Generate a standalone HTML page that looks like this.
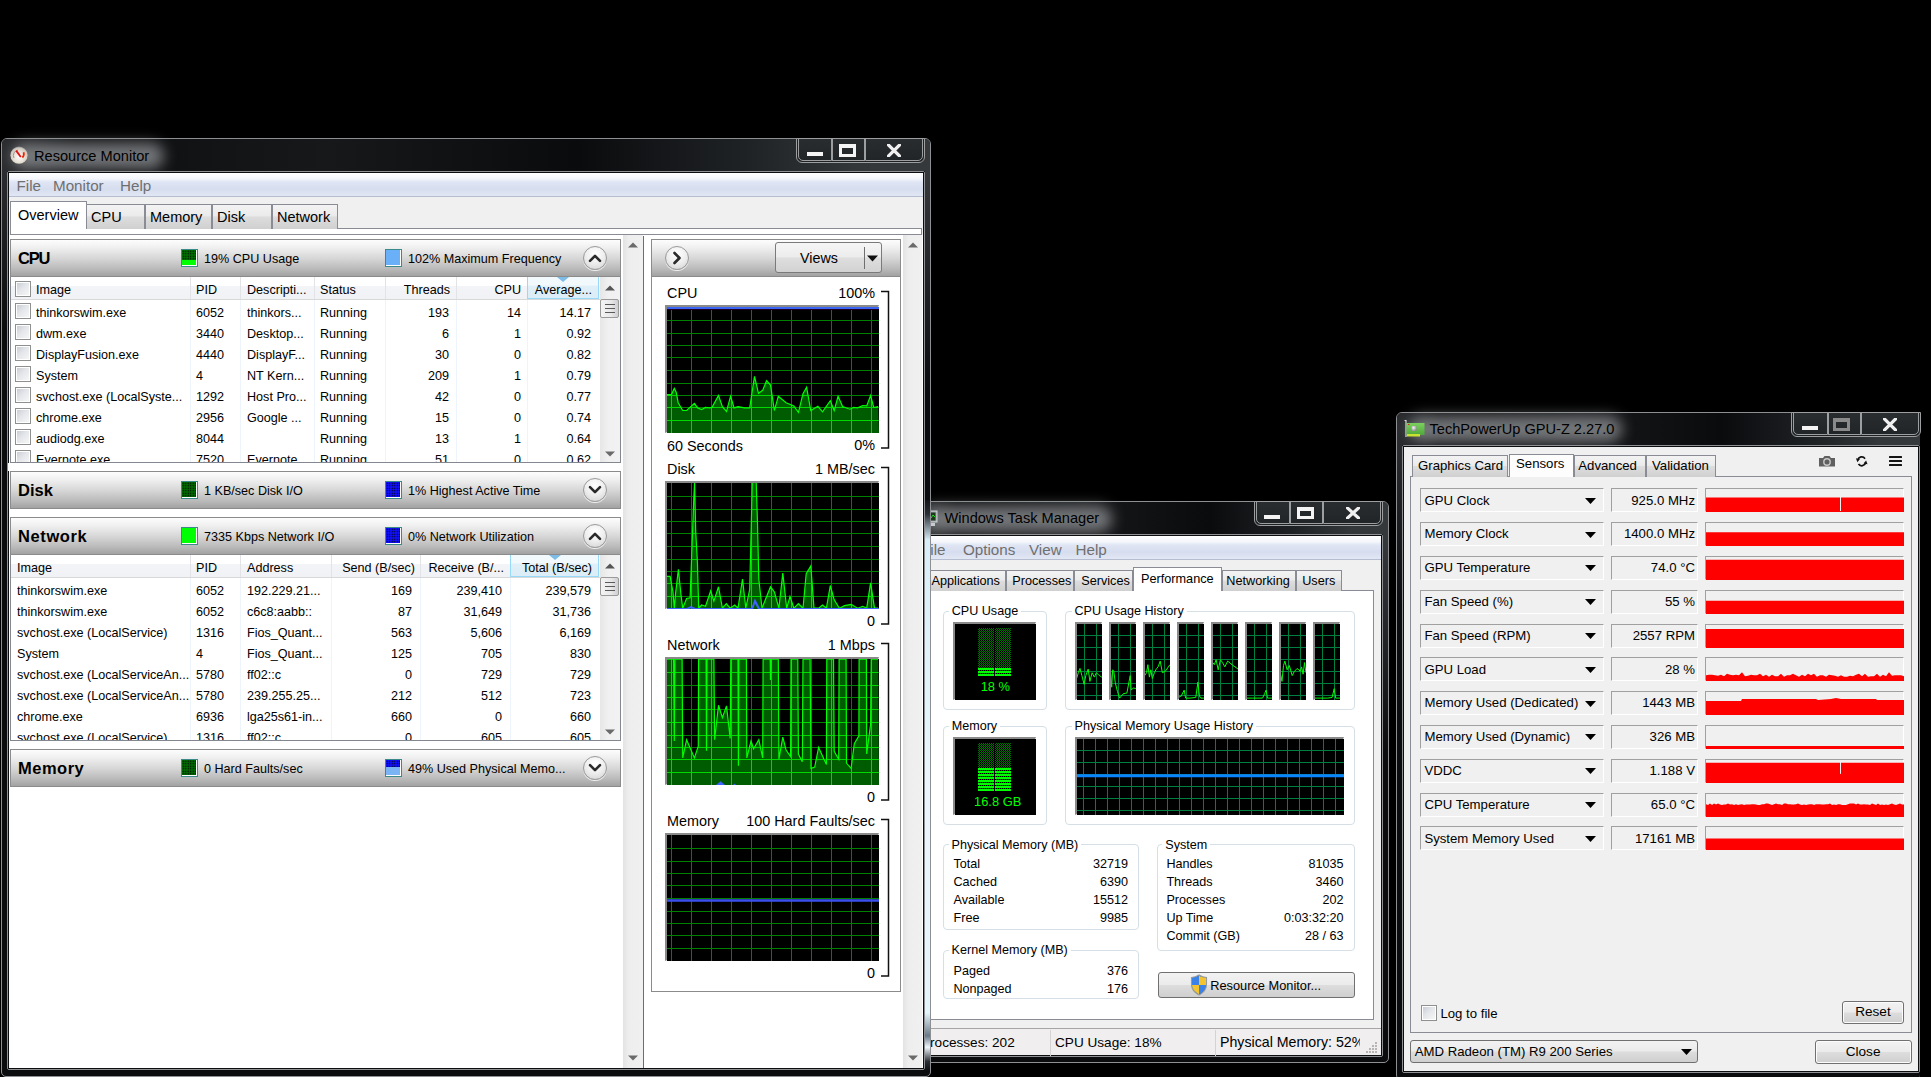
<!DOCTYPE html><html><head><meta charset="utf-8"><title>Resource Monitor</title><style>
html,body{margin:0;padding:0;background:#000;}
body{width:1931px;height:1077px;position:relative;overflow:hidden;font-family:"Liberation Sans",sans-serif;}
div,svg{position:absolute;}
.t{white-space:pre;}
</style></head><body><div style="left:918px;top:501px;width:471px;height:562px;box-sizing:border-box;border:1px solid #8d8f92;border-radius:6px 6px 5px 5px;background:#0b0c0e"></div>
<div style="left:919px;top:502px;width:469px;height:32px;border-radius:5px 5px 0 0;background:linear-gradient(90deg,#2a2c2f 0%,#0d0e10 8%,#16181a 35%,#0a0b0d 62%,#1f2225 80%,#34373a 92%,#36393c 100%)"></div>
<div style="left:919px;top:534px;width:-1px;height:160px;background:linear-gradient(#2a2c2f,#0b0c0e)"></div>
<div style="left:1383px;top:534px;width:5px;height:220px;background:linear-gradient(#36393c,#0b0c0e)"></div>
<div style="left:922.5px;top:505.5px;width:189px;height:26px;border-radius:13px;background:rgba(150,152,155,0.75);filter:blur(7px)"></div>
<div style="left:918px;top:534px;width:465px;height:523px;box-sizing:border-box;border:1px solid #8f9194;border-radius:2px;background:#000"></div>
<div style="left:919px;top:535px;width:463px;height:521px;box-sizing:border-box;border:1px solid #0c0d0e;background:#f0f0f0"></div>
<div class="t" style="top:511.14px;font-size:14.6px;line-height:14.6px;color:#000;left:944.5px;">Windows Task Manager</div>
<svg style="left:924px;top:510px" width="14" height="18" viewBox="0 0 14 18"><rect x="1" y="1" width="12" height="11" fill="#9aa0a6" stroke="#d0d4d8" stroke-width="1"/><rect x="2.5" y="2.5" width="9" height="8" fill="#1a3a1a"/><path d="M3 9 L5 4 L7 8 L9 5 L11 7" fill="none" stroke="#20e020" stroke-width="1"/><rect x="3" y="13" width="8" height="3" fill="#c8ccd0"/></svg>
<div style="left:1254px;top:501px;width:129px;height:25px;box-sizing:border-box;border:1px solid #9c9ea0;border-radius:0 0 6px 6px;background:#1e2124"></div>
<div style="left:1256px;top:501px;width:34px;height:23px;box-sizing:border-box;border:1px solid #9c9ea0;border-radius:0 0 0 5px;background:linear-gradient(#2a2d30,#222528)"></div>
<div style="left:1290px;top:501px;width:33px;height:23px;box-sizing:border-box;border:1px solid #9c9ea0;border-radius:0;background:linear-gradient(#2a2d30,#222528)"></div>
<div style="left:1323px;top:501px;width:58px;height:23px;box-sizing:border-box;border:1px solid #9c9ea0;border-radius:0 0 5px 0;background:linear-gradient(#2a2d30,#222528)"></div>
<div style="left:1264px;top:515px;width:16px;height:4px;background:#f4f4f4"></div>
<div style="left:1296.5px;top:507px;width:17px;height:12px;box-sizing:border-box;border:3px solid #f4f4f4;border-top-width:4px"></div>
<svg style="left:1346px;top:507px" width="14" height="12" viewBox="0 0 14 12"><path d="M1.5 1 L12.5 11 M12.5 1 L1.5 11" stroke="#f0f0f0" stroke-width="3.2" stroke-linecap="square"/></svg>
<div style="left:919px;top:536px;width:462px;height:24px;background:linear-gradient(#ffffff 0%,#f4f6fb 25%,#dfe5f4 40%,#d6ddee 70%,#e2e7f4 100%);border-bottom:1px solid #b7bdd0;box-sizing:border-box"></div>
<div class="t" style="top:541.63px;font-size:15.2px;line-height:15.2px;color:#6f6f6f;left:921px;">File</div>
<div class="t" style="top:541.63px;font-size:15.2px;line-height:15.2px;color:#6f6f6f;left:963px;">Options</div>
<div class="t" style="top:541.63px;font-size:15.2px;line-height:15.2px;color:#6f6f6f;left:1029px;">View</div>
<div class="t" style="top:541.63px;font-size:15.2px;line-height:15.2px;color:#6f6f6f;left:1075.5px;">Help</div>
<div style="left:919px;top:560px;width:462px;height:31px;background:#f0f0f0"></div>
<div style="left:920px;top:590px;width:454px;height:430px;background:#fff;box-sizing:border-box;border:1px solid #898c95"></div>
<div style="left:918px;top:569.5px;width:88px;height:21.5px;box-sizing:border-box;border:1px solid #898c95;border-bottom:none;background:linear-gradient(#f3f3f3 0%,#ebebeb 45%,#dddddd 50%,#d0d0d0 100%)"></div>
<div class="t" style="top:574.85px;font-size:12.7px;line-height:12.7px;color:#000;left:931.5px;">Applications</div>
<div style="left:1006px;top:569.5px;width:68px;height:21.5px;box-sizing:border-box;border:1px solid #898c95;border-bottom:none;background:linear-gradient(#f3f3f3 0%,#ebebeb 45%,#dddddd 50%,#d0d0d0 100%)"></div>
<div class="t" style="top:574.85px;font-size:12.7px;line-height:12.7px;color:#000;left:1012.2px;">Processes</div>
<div style="left:1074px;top:569.5px;width:59px;height:21.5px;box-sizing:border-box;border:1px solid #898c95;border-bottom:none;background:linear-gradient(#f3f3f3 0%,#ebebeb 45%,#dddddd 50%,#d0d0d0 100%)"></div>
<div class="t" style="top:574.85px;font-size:12.7px;line-height:12.7px;color:#000;left:1081.2px;">Services</div>
<div style="left:1222px;top:569.5px;width:74px;height:21.5px;box-sizing:border-box;border:1px solid #898c95;border-bottom:none;background:linear-gradient(#f3f3f3 0%,#ebebeb 45%,#dddddd 50%,#d0d0d0 100%)"></div>
<div class="t" style="top:574.85px;font-size:12.7px;line-height:12.7px;color:#000;left:1226.3px;">Networking</div>
<div style="left:1296px;top:569.5px;width:46px;height:21.5px;box-sizing:border-box;border:1px solid #898c95;border-bottom:none;background:linear-gradient(#f3f3f3 0%,#ebebeb 45%,#dddddd 50%,#d0d0d0 100%)"></div>
<div class="t" style="top:574.85px;font-size:12.7px;line-height:12.7px;color:#000;left:1302.2px;">Users</div>
<div style="left:1133px;top:567px;width:89px;height:24px;box-sizing:border-box;border:1px solid #898c95;border-bottom:none;background:#fff"></div>
<div class="t" style="top:572.85px;font-size:12.7px;line-height:12.7px;color:#000;left:1141px;">Performance</div>
<div style="left:942.5px;top:610.5px;width:104.0px;height:99.0px;box-sizing:border-box;border:1px solid #d5dfe5;border-radius:4px"></div>
<div class="t" style="left:948.7px;top:602.5px;height:14px;padding:0 3px;background:#fff;color:transparent;font-size:12.6px;line-height:14px">CPU Usage</div>
<div class="t" style="top:605.23px;font-size:12.6px;line-height:12.6px;color:#000;left:951.7px;">CPU Usage</div>
<div style="left:1065.3px;top:610.5px;width:290.10000000000014px;height:99.0px;box-sizing:border-box;border:1px solid #d5dfe5;border-radius:4px"></div>
<div class="t" style="left:1071.5px;top:602.5px;height:14px;padding:0 3px;background:#fff;color:transparent;font-size:12.6px;line-height:14px">CPU Usage History</div>
<div class="t" style="top:605.23px;font-size:12.6px;line-height:12.6px;color:#000;left:1074.5px;">CPU Usage History</div>
<div style="left:942.5px;top:725.5px;width:104.0px;height:99.0px;box-sizing:border-box;border:1px solid #d5dfe5;border-radius:4px"></div>
<div class="t" style="left:948.7px;top:717.5px;height:14px;padding:0 3px;background:#fff;color:transparent;font-size:12.6px;line-height:14px">Memory</div>
<div class="t" style="top:720.23px;font-size:12.6px;line-height:12.6px;color:#000;left:951.7px;">Memory</div>
<div style="left:1065.3px;top:725.5px;width:290.10000000000014px;height:99.0px;box-sizing:border-box;border:1px solid #d5dfe5;border-radius:4px"></div>
<div class="t" style="left:1071.5px;top:717.5px;height:14px;padding:0 3px;background:#fff;color:transparent;font-size:12.6px;line-height:14px">Physical Memory Usage History</div>
<div class="t" style="top:720.23px;font-size:12.6px;line-height:12.6px;color:#000;left:1074.5px;">Physical Memory Usage History</div>
<div style="left:942.6px;top:844px;width:196.89999999999998px;height:85.5px;box-sizing:border-box;border:1px solid #d5dfe5;border-radius:4px"></div>
<div class="t" style="left:948.6px;top:836px;height:14px;padding:0 3px;background:#fff;color:transparent;font-size:12.6px;line-height:14px">Physical Memory (MB)</div>
<div class="t" style="top:838.73px;font-size:12.6px;line-height:12.6px;color:#000;left:951.6px;">Physical Memory (MB)</div>
<div style="left:942.6px;top:949.7px;width:196.89999999999998px;height:49.39999999999998px;box-sizing:border-box;border:1px solid #d5dfe5;border-radius:4px"></div>
<div class="t" style="left:948.6px;top:941.7px;height:14px;padding:0 3px;background:#fff;color:transparent;font-size:12.6px;line-height:14px">Kernel Memory (MB)</div>
<div class="t" style="top:944.43px;font-size:12.6px;line-height:12.6px;color:#000;left:951.6px;">Kernel Memory (MB)</div>
<div style="left:1156.7px;top:844px;width:198.70000000000005px;height:107.29999999999995px;box-sizing:border-box;border:1px solid #d5dfe5;border-radius:4px"></div>
<div class="t" style="left:1162.3px;top:836px;height:14px;padding:0 3px;background:#fff;color:transparent;font-size:12.6px;line-height:14px">System</div>
<div class="t" style="top:838.73px;font-size:12.6px;line-height:12.6px;color:#000;left:1165.3px;">System</div>
<div style="left:953px;top:622px;width:83px;height:78px;box-sizing:border-box;border-top:2px solid #8a8a8a;border-left:2px solid #8a8a8a;border-right:1px solid #f4f4f4;border-bottom:1px solid #f4f4f4"></div>
<div style="left:955px;top:624px;width:81px;height:76px;background:#000"></div>
<div style="left:978px;top:628px;width:16px;height:48px;background:repeating-conic-gradient(#007000 0 25%,#000 0 50%) 0 0/2px 2px"></div>
<div style="left:978px;top:674px;width:16px;height:2px;background:#00ff00"></div>
<div style="left:978px;top:671px;width:16px;height:2px;background:#00ff00"></div>
<div style="left:978px;top:668px;width:16px;height:2px;background:#00ff00"></div>
<div style="left:995px;top:628px;width:16px;height:48px;background:repeating-conic-gradient(#007000 0 25%,#000 0 50%) 0 0/2px 2px"></div>
<div style="left:995px;top:674px;width:16px;height:2px;background:#00ff00"></div>
<div style="left:995px;top:671px;width:16px;height:2px;background:#00ff00"></div>
<div style="left:995px;top:668px;width:16px;height:2px;background:#00ff00"></div>
<div class="t" style="top:681.08px;font-size:12.9px;line-height:12.9px;color:#00ff00;left:980.7px;">18 %</div>
<div style="left:953px;top:737px;width:83px;height:78px;box-sizing:border-box;border-top:2px solid #8a8a8a;border-left:2px solid #8a8a8a;border-right:1px solid #f4f4f4;border-bottom:1px solid #f4f4f4"></div>
<div style="left:955px;top:739px;width:81px;height:76px;background:#000"></div>
<div style="left:978px;top:743px;width:16px;height:48px;background:repeating-conic-gradient(#007000 0 25%,#000 0 50%) 0 0/2px 2px"></div>
<div style="left:978px;top:789px;width:16px;height:2px;background:#00ff00"></div>
<div style="left:978px;top:786px;width:16px;height:2px;background:#00ff00"></div>
<div style="left:978px;top:783px;width:16px;height:2px;background:#00ff00"></div>
<div style="left:978px;top:780px;width:16px;height:2px;background:#00ff00"></div>
<div style="left:978px;top:777px;width:16px;height:2px;background:#00ff00"></div>
<div style="left:978px;top:774px;width:16px;height:2px;background:#00ff00"></div>
<div style="left:978px;top:771px;width:16px;height:2px;background:#00ff00"></div>
<div style="left:978px;top:768px;width:16px;height:2px;background:#00ff00"></div>
<div style="left:995px;top:743px;width:16px;height:48px;background:repeating-conic-gradient(#007000 0 25%,#000 0 50%) 0 0/2px 2px"></div>
<div style="left:995px;top:789px;width:16px;height:2px;background:#00ff00"></div>
<div style="left:995px;top:786px;width:16px;height:2px;background:#00ff00"></div>
<div style="left:995px;top:783px;width:16px;height:2px;background:#00ff00"></div>
<div style="left:995px;top:780px;width:16px;height:2px;background:#00ff00"></div>
<div style="left:995px;top:777px;width:16px;height:2px;background:#00ff00"></div>
<div style="left:995px;top:774px;width:16px;height:2px;background:#00ff00"></div>
<div style="left:995px;top:771px;width:16px;height:2px;background:#00ff00"></div>
<div style="left:995px;top:768px;width:16px;height:2px;background:#00ff00"></div>
<div class="t" style="top:796.08px;font-size:12.9px;line-height:12.9px;color:#00ff00;left:974px;">16.8 GB</div>
<div style="left:1075.4px;top:622.3px;width:27px;height:78px;box-sizing:border-box;border-top:2px solid #8a8a8a;border-left:2px solid #8a8a8a;border-right:1px solid #f4f4f4;border-bottom:1px solid #f4f4f4"></div>
<svg style="left:1077.4px;top:624.3px" width="25" height="76" viewBox="0 0 25 76"><rect width="25" height="76" fill="#000"/><path d="M7.5 0V76M19.5 0V76M0 11.5H25M0 23.5H25M0 35.5H25M0 47.5H25M0 59.5H25M0 71.5H25" stroke="#008040" stroke-width="1"/><path d="M-0.4 54.5 L1.3 48.7 L3.0 44.4 L4.9 51.6 L7.1 60.3 L8.8 51.6 L11.2 45.1 L12.9 57.4 L15.1 48.7 L17.3 53.1 L19.4 48.7 L22.3 51.6 L24.8 53.1" fill="none" stroke="#00ff00" stroke-width="1.0" stroke-linejoin="miter"/></svg>
<div style="left:1109.4px;top:622.3px;width:27px;height:78px;box-sizing:border-box;border-top:2px solid #8a8a8a;border-left:2px solid #8a8a8a;border-right:1px solid #f4f4f4;border-bottom:1px solid #f4f4f4"></div>
<svg style="left:1111.4px;top:624.3px" width="25" height="76" viewBox="0 0 25 76"><rect width="25" height="76" fill="#000"/><path d="M7.5 0V76M19.5 0V76M0 11.5H25M0 23.5H25M0 35.5H25M0 47.5H25M0 59.5H25M0 71.5H25" stroke="#008040" stroke-width="1"/><path d="M-0.4 47.3 L0.7 63.2 L1.7 45.8 L2.8 47.3 L4.3 58.9 L6.5 67.6 L8.6 74.1 L12.3 69.7 L15.9 69.0 L18.1 57.4 L19.2 51.6 L20.2 66.1 L22.4 63.9 L24.9 64.7" fill="none" stroke="#00ff00" stroke-width="1.0" stroke-linejoin="miter"/></svg>
<div style="left:1143.4px;top:622.3px;width:27px;height:78px;box-sizing:border-box;border-top:2px solid #8a8a8a;border-left:2px solid #8a8a8a;border-right:1px solid #f4f4f4;border-bottom:1px solid #f4f4f4"></div>
<svg style="left:1145.4px;top:624.3px" width="25" height="76" viewBox="0 0 25 76"><rect width="25" height="76" fill="#000"/><path d="M7.5 0V76M19.5 0V76M0 11.5H25M0 23.5H25M0 35.5H25M0 47.5H25M0 59.5H25M0 71.5H25" stroke="#008040" stroke-width="1"/><path d="M-0.3 51.6 L1.5 48.7 L2.9 40.7 L4.4 53.1 L5.8 45.8 L7.3 54.5 L9.4 48.7 L11.6 44.4 L13.1 42.9 L15.2 37.1 L17.4 48.7 L20.3 47.3 L24.9 40.7" fill="none" stroke="#00ff00" stroke-width="1.0" stroke-linejoin="miter"/></svg>
<div style="left:1177.4px;top:622.3px;width:27px;height:78px;box-sizing:border-box;border-top:2px solid #8a8a8a;border-left:2px solid #8a8a8a;border-right:1px solid #f4f4f4;border-bottom:1px solid #f4f4f4"></div>
<svg style="left:1179.4px;top:624.3px" width="25" height="76" viewBox="0 0 25 76"><rect width="25" height="76" fill="#000"/><path d="M7.5 0V76M19.5 0V76M0 11.5H25M0 23.5H25M0 35.5H25M0 47.5H25M0 59.5H25M0 71.5H25" stroke="#008040" stroke-width="1"/><path d="M-0.4 73.4 L2.3 71.9 L5.2 66.1 L6.6 74.1 L11.0 74.1 L16.8 73.4 L18.9 58.1 L20.4 71.9 L21.8 74.1 L25.0 74.1" fill="none" stroke="#00ff00" stroke-width="1.0" stroke-linejoin="miter"/></svg>
<div style="left:1211.4px;top:622.3px;width:27px;height:78px;box-sizing:border-box;border-top:2px solid #8a8a8a;border-left:2px solid #8a8a8a;border-right:1px solid #f4f4f4;border-bottom:1px solid #f4f4f4"></div>
<svg style="left:1213.4px;top:624.3px" width="25" height="76" viewBox="0 0 25 76"><rect width="25" height="76" fill="#000"/><path d="M7.5 0V76M19.5 0V76M0 11.5H25M0 23.5H25M0 35.5H25M0 47.5H25M0 59.5H25M0 71.5H25" stroke="#008040" stroke-width="1"/><path d="M-0.1 38.6 L1.3 40.7 L3.1 35.7 L5.2 45.8 L7.4 35.7 L9.6 38.6 L11.8 42.9 L14.7 37.1 L19.0 40.7 L25.1 45.1" fill="none" stroke="#00ff00" stroke-width="1.0" stroke-linejoin="miter"/></svg>
<div style="left:1245.4px;top:622.3px;width:27px;height:78px;box-sizing:border-box;border-top:2px solid #8a8a8a;border-left:2px solid #8a8a8a;border-right:1px solid #f4f4f4;border-bottom:1px solid #f4f4f4"></div>
<svg style="left:1247.4px;top:624.3px" width="25" height="76" viewBox="0 0 25 76"><rect width="25" height="76" fill="#000"/><path d="M7.5 0V76M19.5 0V76M0 11.5H25M0 23.5H25M0 35.5H25M0 47.5H25M0 59.5H25M0 71.5H25" stroke="#008040" stroke-width="1"/><path d="M-0.5 74.1 L5.3 74.1 L15.5 74.1 L17.6 69.7 L19.1 66.1 L20.5 74.1 L25.2 74.1" fill="none" stroke="#00ff00" stroke-width="1.0" stroke-linejoin="miter"/></svg>
<div style="left:1279.4px;top:622.3px;width:27px;height:78px;box-sizing:border-box;border-top:2px solid #8a8a8a;border-left:2px solid #8a8a8a;border-right:1px solid #f4f4f4;border-bottom:1px solid #f4f4f4"></div>
<svg style="left:1281.4px;top:624.3px" width="25" height="76" viewBox="0 0 25 76"><rect width="25" height="76" fill="#000"/><path d="M7.5 0V76M19.5 0V76M0 11.5H25M0 23.5H25M0 35.5H25M0 47.5H25M0 59.5H25M0 71.5H25" stroke="#008040" stroke-width="1"/><path d="M-0.4 50.2 L1.0 57.4 L2.5 41.5 L3.9 37.1 L6.1 45.8 L8.3 41.5 L11.2 51.6 L13.4 47.3 L16.3 44.4 L19.2 47.3 L20.6 42.9 L22.1 50.2 L23.5 38.6 L25.0 48.7" fill="none" stroke="#00ff00" stroke-width="1.0" stroke-linejoin="miter"/></svg>
<div style="left:1313.4px;top:622.3px;width:27px;height:78px;box-sizing:border-box;border-top:2px solid #8a8a8a;border-left:2px solid #8a8a8a;border-right:1px solid #f4f4f4;border-bottom:1px solid #f4f4f4"></div>
<svg style="left:1315.4px;top:624.3px" width="25" height="76" viewBox="0 0 25 76"><rect width="25" height="76" fill="#000"/><path d="M7.5 0V76M19.5 0V76M0 11.5H25M0 23.5H25M0 35.5H25M0 47.5H25M0 59.5H25M0 71.5H25" stroke="#008040" stroke-width="1"/><path d="M-0.3 74.1 L12.7 74.1 L17.1 73.4 L19.2 64.7 L20.7 74.1 L25.3 74.1" fill="none" stroke="#00ff00" stroke-width="1.0" stroke-linejoin="miter"/></svg>
<div style="left:1075.4px;top:737.3px;width:269px;height:78px;box-sizing:border-box;border-top:2px solid #8a8a8a;border-left:2px solid #8a8a8a;border-right:1px solid #f4f4f4;border-bottom:1px solid #f4f4f4"></div>
<svg style="left:1077.4px;top:739.3px" width="267" height="76" viewBox="0 0 267 76"><rect width="267" height="76" fill="#000"/><path d="M6.5 0V76M18.5 0V76M30.5 0V76M42.5 0V76M54.5 0V76M66.5 0V76M78.5 0V76M90.5 0V76M102.5 0V76M114.5 0V76M126.5 0V76M138.5 0V76M150.5 0V76M162.5 0V76M174.5 0V76M186.5 0V76M198.5 0V76M210.5 0V76M222.5 0V76M234.5 0V76M246.5 0V76M258.5 0V76M0 11.5H267M0 23.5H267M0 35.5H267M0 47.5H267M0 59.5H267M0 71.5H267" stroke="#008040" stroke-width="1"/><path d="M0.0 36.8 L267.0 36.8" fill="none" stroke="#0a84ff" stroke-width="3" stroke-linejoin="miter"/></svg>
<div class="t" style="top:858.43px;font-size:12.6px;line-height:12.6px;color:#000;left:953.5px;">Total</div>
<div class="t" style="top:858.43px;font-size:12.6px;line-height:12.6px;color:#000;right:803px;text-align:right;">32719</div>
<div class="t" style="top:876.43px;font-size:12.6px;line-height:12.6px;color:#000;left:953.5px;">Cached</div>
<div class="t" style="top:876.43px;font-size:12.6px;line-height:12.6px;color:#000;right:803px;text-align:right;">6390</div>
<div class="t" style="top:894.43px;font-size:12.6px;line-height:12.6px;color:#000;left:953.5px;">Available</div>
<div class="t" style="top:894.43px;font-size:12.6px;line-height:12.6px;color:#000;right:803px;text-align:right;">15512</div>
<div class="t" style="top:912.43px;font-size:12.6px;line-height:12.6px;color:#000;left:953.5px;">Free</div>
<div class="t" style="top:912.43px;font-size:12.6px;line-height:12.6px;color:#000;right:803px;text-align:right;">9985</div>
<div class="t" style="top:964.53px;font-size:12.6px;line-height:12.6px;color:#000;left:953.5px;">Paged</div>
<div class="t" style="top:964.53px;font-size:12.6px;line-height:12.6px;color:#000;right:803px;text-align:right;">376</div>
<div class="t" style="top:982.53px;font-size:12.6px;line-height:12.6px;color:#000;left:953.5px;">Nonpaged</div>
<div class="t" style="top:982.53px;font-size:12.6px;line-height:12.6px;color:#000;right:803px;text-align:right;">176</div>
<div class="t" style="top:858.43px;font-size:12.6px;line-height:12.6px;color:#000;left:1166.4px;">Handles</div>
<div class="t" style="top:858.43px;font-size:12.6px;line-height:12.6px;color:#000;right:587.5px;text-align:right;">81035</div>
<div class="t" style="top:876.43px;font-size:12.6px;line-height:12.6px;color:#000;left:1166.4px;">Threads</div>
<div class="t" style="top:876.43px;font-size:12.6px;line-height:12.6px;color:#000;right:587.5px;text-align:right;">3460</div>
<div class="t" style="top:894.43px;font-size:12.6px;line-height:12.6px;color:#000;left:1166.4px;">Processes</div>
<div class="t" style="top:894.43px;font-size:12.6px;line-height:12.6px;color:#000;right:587.5px;text-align:right;">202</div>
<div class="t" style="top:912.43px;font-size:12.6px;line-height:12.6px;color:#000;left:1166.4px;">Up Time</div>
<div class="t" style="top:912.43px;font-size:12.6px;line-height:12.6px;color:#000;right:587.5px;text-align:right;">0:03:32:20</div>
<div class="t" style="top:930.43px;font-size:12.6px;line-height:12.6px;color:#000;left:1166.4px;">Commit (GB)</div>
<div class="t" style="top:930.43px;font-size:12.6px;line-height:12.6px;color:#000;right:587.5px;text-align:right;">28 / 63</div>
<div style="left:1157.5px;top:972px;width:197px;height:25.5px;box-sizing:border-box;border:1px solid #707070;border-radius:3px;background:linear-gradient(#f2f2f2 0%,#ebebeb 48%,#dddddd 52%,#cfcfcf 100%)"></div>
<svg style="left:1190px;top:974px" width="18" height="22" viewBox="0 0 18 22"><path d="M9 1 C6 3 3.5 3.5 1.5 3.5 V10 C1.5 15 5 19 9 21 C13 19 16.5 15 16.5 10 V3.5 C14.5 3.5 12 3 9 1Z" fill="#2a6fd6" stroke="#9a9a9a" stroke-width="1.1"/><path d="M9 1.8 V11 H2 V3.9 C4 3.8 6.5 3.3 9 1.8Z" fill="#3b82e8"/><path d="M9 11 H16 C15.6 15 12.8 18.3 9 20.2Z" fill="#3b82e8"/><path d="M9 1.8 C11.5 3.3 14 3.8 16 3.9 V11 H9Z" fill="#f4c430"/><path d="M9 11 V20.2 C5.2 18.3 2.4 15 2 11Z" fill="#f4c430"/></svg>
<div class="t" style="top:979.76px;font-size:12.8px;line-height:12.8px;color:#000;left:1210.2px;">Resource Monitor...</div>
<div style="left:919px;top:1028px;width:462px;height:27px;background:#f0eeee;border-top:1px solid #a5a5a5;box-sizing:border-box"></div>
<div style="left:1050px;top:1030px;width:1px;height:26px;background:#d7d2d2"></div>
<div style="left:1215px;top:1030px;width:1px;height:26px;background:#d7d2d2"></div>
<div class="t" style="top:1036.19px;font-size:13.6px;line-height:13.6px;color:#000;left:921px;">Processes: 202</div>
<div class="t" style="top:1036.19px;font-size:13.6px;line-height:13.6px;color:#000;left:1055px;">CPU Usage: 18%</div>
<div style="left:1215px;top:1030px;width:145px;height:26px;overflow:hidden"><div class="t" style="left:5px;top:5.4px;font-size:14.2px;line-height:14.2px;color:#000">Physical Memory: 52%</div></div>
<svg style="left:1364px;top:1040px" width="14" height="14"><rect x="11" y="11" width="2" height="2" fill="#b8b4b4"/><rect x="11" y="8" width="2" height="2" fill="#b8b4b4"/><rect x="11" y="5" width="2" height="2" fill="#b8b4b4"/><rect x="11" y="2" width="2" height="2" fill="#b8b4b4"/><rect x="8" y="11" width="2" height="2" fill="#b8b4b4"/><rect x="8" y="8" width="2" height="2" fill="#b8b4b4"/><rect x="8" y="5" width="2" height="2" fill="#b8b4b4"/><rect x="5" y="11" width="2" height="2" fill="#b8b4b4"/><rect x="5" y="8" width="2" height="2" fill="#b8b4b4"/><rect x="2" y="11" width="2" height="2" fill="#b8b4b4"/></svg>
<div style="left:1px;top:138px;width:930px;height:939px;box-sizing:border-box;border:1px solid #8d8f92;border-radius:6px 6px 5px 5px;background:#0b0c0e"></div>
<div style="left:2px;top:139px;width:928px;height:32px;border-radius:5px 5px 0 0;background:linear-gradient(90deg,#2a2c2f 0%,#0d0e10 8%,#16181a 35%,#0a0b0d 62%,#1f2225 80%,#34373a 92%,#36393c 100%)"></div>
<div style="left:2px;top:171px;width:5px;height:160px;background:linear-gradient(#2a2c2f,#0b0c0e)"></div>
<div style="left:925px;top:171px;width:5px;height:220px;background:linear-gradient(#36393c,#0b0c0e)"></div>
<div style="left:12px;top:143px;width:152px;height:26px;border-radius:13px;background:rgba(150,152,155,0.75);filter:blur(7px)"></div>
<div style="left:7px;top:171px;width:918px;height:899px;box-sizing:border-box;border:1px solid #8f9194;border-radius:2px;background:#000"></div>
<div style="left:8px;top:172px;width:916px;height:897px;box-sizing:border-box;border:1px solid #0c0d0e;background:#f0f0f0"></div>
<div class="t" style="top:148.64px;font-size:14.6px;line-height:14.6px;color:#000;left:34px;">Resource Monitor</div>
<svg style="left:9px;top:146px" width="20" height="19" viewBox="0 0 20 19"><defs><radialGradient id="rmic" cx="50%" cy="60%" r="60%"><stop offset="0" stop-color="#ffffff"/><stop offset="0.55" stop-color="#e6dfd4"/><stop offset="0.85" stop-color="#cfc8be"/><stop offset="1" stop-color="#8a8d92"/></radialGradient></defs><circle cx="10" cy="9.2" r="8.6" fill="url(#rmic)"/><path d="M5 12 A5.5 5.5 0 0 1 9 4" fill="none" stroke="#9a9690" stroke-width="1"/><path d="M7.2 4.6 L11.8 11" stroke="#e41010" stroke-width="1.8"/><path d="M14.6 6.2 C15.2 8 14.8 10 13.4 11.6" fill="none" stroke="#f02000" stroke-width="1.7"/></svg>
<div style="left:796px;top:138px;width:129px;height:25px;box-sizing:border-box;border:1px solid #9c9ea0;border-radius:0 0 6px 6px;background:#1e2124"></div>
<div style="left:798px;top:138px;width:34px;height:23px;box-sizing:border-box;border:1px solid #9c9ea0;border-radius:0 0 0 5px;background:linear-gradient(#2a2d30,#222528)"></div>
<div style="left:832px;top:138px;width:33px;height:23px;box-sizing:border-box;border:1px solid #9c9ea0;border-radius:0;background:linear-gradient(#2a2d30,#222528)"></div>
<div style="left:865px;top:138px;width:58px;height:23px;box-sizing:border-box;border:1px solid #9c9ea0;border-radius:0 0 5px 0;background:linear-gradient(#2a2d30,#222528)"></div>
<div style="left:807px;top:152px;width:16px;height:4px;background:#f4f4f4"></div>
<div style="left:839px;top:144px;width:17px;height:13px;box-sizing:border-box;border:3px solid #f4f4f4;border-top-width:4px"></div>
<svg style="left:887px;top:144px" width="14" height="13" viewBox="0 0 14 13"><path d="M1.5 1 L12.5 12 M12.5 1 L1.5 12" stroke="#f0f0f0" stroke-width="3.2" stroke-linecap="square"/></svg>
<div style="left:925px;top:500px;width:5px;height:570px;background:linear-gradient(#121416 0%,#2a2f34 2.5%,#8a9aa6 5%,#d8eef8 7%,#eaf6fc 50%,#e6f4fb 90%,#6a7a88 94%,#f0f8ff 96%,#2a2f34 98.5%,#101214 100%)"></div>
<div style="left:9px;top:173px;width:914px;height:24px;background:linear-gradient(#ffffff 0%,#f4f6fb 25%,#dfe5f4 40%,#d6ddee 70%,#e2e7f4 100%);border-bottom:1px solid #b7bdd0;box-sizing:border-box"></div>
<div class="t" style="top:178.13px;font-size:15.2px;line-height:15.2px;color:#6f6f6f;left:16.5px;">File</div>
<div class="t" style="top:178.13px;font-size:15.2px;line-height:15.2px;color:#6f6f6f;left:53px;">Monitor</div>
<div class="t" style="top:178.13px;font-size:15.2px;line-height:15.2px;color:#6f6f6f;left:120px;">Help</div>
<div style="left:9px;top:197px;width:914px;height:38px;background:#f0f0f0"></div>
<div style="left:10px;top:228px;width:912px;height:7px;background:#fff;box-sizing:border-box;border:1px solid #898c95;border-top:none"></div>
<div style="left:10px;top:228px;width:912px;height:1px;background:#898c95"></div>
<div style="left:86px;top:204px;width:59px;height:25px;box-sizing:border-box;border:1px solid #898c95;border-bottom:none;background:linear-gradient(#f3f3f3 0%,#ebebeb 45%,#dddddd 50%,#d0d0d0 100%)"></div>
<div class="t" style="top:210.13px;font-size:14.5px;line-height:14.5px;color:#000;left:91px;">CPU</div>
<div style="left:145px;top:204px;width:67px;height:25px;box-sizing:border-box;border:1px solid #898c95;border-bottom:none;background:linear-gradient(#f3f3f3 0%,#ebebeb 45%,#dddddd 50%,#d0d0d0 100%)"></div>
<div class="t" style="top:210.13px;font-size:14.5px;line-height:14.5px;color:#000;left:150px;">Memory</div>
<div style="left:212px;top:204px;width:60px;height:25px;box-sizing:border-box;border:1px solid #898c95;border-bottom:none;background:linear-gradient(#f3f3f3 0%,#ebebeb 45%,#dddddd 50%,#d0d0d0 100%)"></div>
<div class="t" style="top:210.13px;font-size:14.5px;line-height:14.5px;color:#000;left:217px;">Disk</div>
<div style="left:272px;top:204px;width:66px;height:25px;box-sizing:border-box;border:1px solid #898c95;border-bottom:none;background:linear-gradient(#f3f3f3 0%,#ebebeb 45%,#dddddd 50%,#d0d0d0 100%)"></div>
<div class="t" style="top:210.13px;font-size:14.5px;line-height:14.5px;color:#000;left:277px;">Network</div>
<div style="left:10px;top:201px;width:77px;height:28px;box-sizing:border-box;border:1px solid #898c95;border-bottom:none;background:#fff"></div>
<div class="t" style="top:208.13px;font-size:14.5px;line-height:14.5px;color:#000;left:18px;">Overview</div>
<div style="left:9px;top:235px;width:914px;height:833px;background:#fff"></div>
<div style="left:623px;top:235px;width:20px;height:833px;background:linear-gradient(90deg,#e3e3e3 0%,#eeeeee 30%,#f0f0f0 100%)"></div>
<svg style="left:628.0px;top:242px" width="10" height="6"><path d="M0 5.5 L5 0.5 L10 5.5Z" fill="#6a6a6a"/></svg>
<svg style="left:628.0px;top:1055px" width="10" height="6"><path d="M0 0.5 L5 5.5 L10 0.5Z" fill="#6a6a6a"/></svg>
<div style="left:643px;top:236px;width:1px;height:832px;background:#6d6d6d"></div>
<div style="left:903px;top:235px;width:19px;height:833px;background:linear-gradient(90deg,#e3e3e3 0%,#eeeeee 30%,#f0f0f0 100%)"></div>
<svg style="left:907.5px;top:242px" width="10" height="6"><path d="M0 5.5 L5 0.5 L10 5.5Z" fill="#6a6a6a"/></svg>
<svg style="left:907.5px;top:1055px" width="10" height="6"><path d="M0 0.5 L5 5.5 L10 0.5Z" fill="#6a6a6a"/></svg>
<div style="left:10px;top:239px;width:611px;height:38px;box-sizing:border-box;border:1px solid #8b8b8b;background:linear-gradient(#fdfdfd 0%,#efefef 22%,#d6d6d6 52%,#bababa 80%,#a2a2a2 100%)"></div>
<div class="t" style="top:249.53px;font-size:16.5px;line-height:16.5px;color:#000;font-weight:700;letter-spacing:-1.2px;left:18px;">CPU</div>
<div style="left:181px;top:249px;width:17px;height:18px;box-sizing:border-box;border:1px solid #3a8a8a;background:#fff"><div style="left:0;top:0;width:14px;height:15px;background:#007000"></div><div style="left:0;top:0;width:14px;height:10px;background-image:radial-gradient(circle,#000 0.6px,transparent 0.9px);background-size:2.5px 2.5px;"></div><div style="left:0;top:10px;width:14px;height:5px;background:#00ff00"></div></div>
<div class="t" style="top:252.73px;font-size:12.6px;line-height:12.6px;color:#000;left:204px;">19% CPU Usage</div>
<div style="left:385px;top:249px;width:17px;height:18px;box-sizing:border-box;border:1px solid #3a8a8a;background:#fff"><div style="left:0;top:0;width:14px;height:15px;background:#6ab0f8"></div></div>
<div class="t" style="top:252.73px;font-size:12.6px;line-height:12.6px;color:#000;left:408px;">102% Maximum Frequency</div>
<div style="left:583px;top:245.5px;width:24px;height:24px;border-radius:12px;box-sizing:border-box;border:1px solid #9a9a9a;background:radial-gradient(circle at 50% 30%,#ffffff 0%,#eeeeee 50%,#d0d0d0 100%);box-shadow:0 1px 0 rgba(255,255,255,0.8)"></div>
<svg style="left:583px;top:245.5px" width="24" height="24" viewBox="583 245.5 24 24"><path d="M590 260.3 L595 255.3 L600 260.3" fill="none" stroke="#2a2a2a" stroke-width="2.6" stroke-linecap="round" stroke-linejoin="round"/></svg>
<div style="left:10px;top:277px;width:611px;height:186px;box-sizing:border-box;border:1px solid #828790;border-top:none;background:#fff"></div>
<div style="left:11px;top:277px;width:589px;height:22px;background:linear-gradient(#ffffff 0%,#ffffff 40%,#f3f4f7 41%,#f1f2f5 100%);border-bottom:1px solid #d8d8d8"></div>
<div style="left:527px;top:277px;width:72px;height:22px;box-sizing:border-box;border:1px solid #96d9f9;border-top:none;background:linear-gradient(#f2f9fd 0%,#f2f9fd 40%,#e0eff8 41%,#dcedf7 100%)"></div>
<svg style="left:557.0px;top:277px" width="12" height="5"><path d="M0 0 L12 0 L6 5Z" fill="#7dbce6"/></svg>
<div style="left:190px;top:277px;width:1px;height:22px;background:#e2e3e6"></div>
<div style="left:190px;top:300px;width:1px;height:162px;background:#eef4fb"></div>
<div style="left:240px;top:277px;width:1px;height:22px;background:#e2e3e6"></div>
<div style="left:240px;top:300px;width:1px;height:162px;background:#eef4fb"></div>
<div style="left:314px;top:277px;width:1px;height:22px;background:#e2e3e6"></div>
<div style="left:314px;top:300px;width:1px;height:162px;background:#eef4fb"></div>
<div style="left:385px;top:277px;width:1px;height:22px;background:#e2e3e6"></div>
<div style="left:385px;top:300px;width:1px;height:162px;background:#eef4fb"></div>
<div style="left:456px;top:277px;width:1px;height:22px;background:#e2e3e6"></div>
<div style="left:456px;top:300px;width:1px;height:162px;background:#eef4fb"></div>
<div style="left:527px;top:300px;width:1px;height:162px;background:#eef4fb"></div>
<div class="t" style="top:283.53px;font-size:12.6px;line-height:12.6px;color:#000;left:36px;">Image</div>
<div class="t" style="top:283.53px;font-size:12.6px;line-height:12.6px;color:#000;left:196px;">PID</div>
<div class="t" style="top:283.53px;font-size:12.6px;line-height:12.6px;color:#000;left:247px;">Descripti...</div>
<div class="t" style="top:283.53px;font-size:12.6px;line-height:12.6px;color:#000;left:320px;">Status</div>
<div class="t" style="top:283.53px;font-size:12.6px;line-height:12.6px;color:#000;right:1481px;text-align:right;">Threads</div>
<div class="t" style="top:283.53px;font-size:12.6px;line-height:12.6px;color:#000;right:1410px;text-align:right;">CPU</div>
<div class="t" style="top:283.53px;font-size:12.6px;line-height:12.6px;color:#000;right:1339px;text-align:right;">Average...</div>
<div style="left:15px;top:281px;width:16px;height:16px;box-sizing:border-box;border:1px solid #8e8f8f;background:#fff"><div style="left:1px;top:1px;width:12px;height:12px;background:linear-gradient(135deg,#c9ced6 0%,#e4e6ea 45%,#f6f6f6 100%)"></div></div>
<div style="left:15px;top:303.0px;width:16px;height:16px;box-sizing:border-box;border:1px solid #8e8f8f;background:#fff"><div style="left:1px;top:1px;width:12px;height:12px;background:linear-gradient(135deg,#c9ced6 0%,#e4e6ea 45%,#f6f6f6 100%)"></div></div>
<div class="t" style="top:306.83px;font-size:12.6px;line-height:12.6px;color:#000;width:153px;overflow:hidden;height:16.4px;left:36px;">thinkorswim.exe</div>
<div class="t" style="top:306.83px;font-size:12.6px;line-height:12.6px;color:#000;width:43px;overflow:hidden;height:16.4px;left:196px;">6052</div>
<div class="t" style="top:306.83px;font-size:12.6px;line-height:12.6px;color:#000;width:66px;overflow:hidden;height:16.4px;left:247px;">thinkors...</div>
<div class="t" style="top:306.83px;font-size:12.6px;line-height:12.6px;color:#000;width:64px;overflow:hidden;height:16.4px;left:320px;">Running</div>
<div class="t" style="top:306.83px;font-size:12.6px;line-height:12.6px;color:#000;right:1482px;text-align:right;">193</div>
<div class="t" style="top:306.83px;font-size:12.6px;line-height:12.6px;color:#000;right:1410px;text-align:right;">14</div>
<div class="t" style="top:306.83px;font-size:12.6px;line-height:12.6px;color:#000;right:1340px;text-align:right;">14.17</div>
<div style="left:15px;top:324.0px;width:16px;height:16px;box-sizing:border-box;border:1px solid #8e8f8f;background:#fff"><div style="left:1px;top:1px;width:12px;height:12px;background:linear-gradient(135deg,#c9ced6 0%,#e4e6ea 45%,#f6f6f6 100%)"></div></div>
<div class="t" style="top:327.83px;font-size:12.6px;line-height:12.6px;color:#000;width:153px;overflow:hidden;height:16.4px;left:36px;">dwm.exe</div>
<div class="t" style="top:327.83px;font-size:12.6px;line-height:12.6px;color:#000;width:43px;overflow:hidden;height:16.4px;left:196px;">3440</div>
<div class="t" style="top:327.83px;font-size:12.6px;line-height:12.6px;color:#000;width:66px;overflow:hidden;height:16.4px;left:247px;">Desktop...</div>
<div class="t" style="top:327.83px;font-size:12.6px;line-height:12.6px;color:#000;width:64px;overflow:hidden;height:16.4px;left:320px;">Running</div>
<div class="t" style="top:327.83px;font-size:12.6px;line-height:12.6px;color:#000;right:1482px;text-align:right;">6</div>
<div class="t" style="top:327.83px;font-size:12.6px;line-height:12.6px;color:#000;right:1410px;text-align:right;">1</div>
<div class="t" style="top:327.83px;font-size:12.6px;line-height:12.6px;color:#000;right:1340px;text-align:right;">0.92</div>
<div style="left:15px;top:345.0px;width:16px;height:16px;box-sizing:border-box;border:1px solid #8e8f8f;background:#fff"><div style="left:1px;top:1px;width:12px;height:12px;background:linear-gradient(135deg,#c9ced6 0%,#e4e6ea 45%,#f6f6f6 100%)"></div></div>
<div class="t" style="top:348.83px;font-size:12.6px;line-height:12.6px;color:#000;width:153px;overflow:hidden;height:16.4px;left:36px;">DisplayFusion.exe</div>
<div class="t" style="top:348.83px;font-size:12.6px;line-height:12.6px;color:#000;width:43px;overflow:hidden;height:16.4px;left:196px;">4440</div>
<div class="t" style="top:348.83px;font-size:12.6px;line-height:12.6px;color:#000;width:66px;overflow:hidden;height:16.4px;left:247px;">DisplayF...</div>
<div class="t" style="top:348.83px;font-size:12.6px;line-height:12.6px;color:#000;width:64px;overflow:hidden;height:16.4px;left:320px;">Running</div>
<div class="t" style="top:348.83px;font-size:12.6px;line-height:12.6px;color:#000;right:1482px;text-align:right;">30</div>
<div class="t" style="top:348.83px;font-size:12.6px;line-height:12.6px;color:#000;right:1410px;text-align:right;">0</div>
<div class="t" style="top:348.83px;font-size:12.6px;line-height:12.6px;color:#000;right:1340px;text-align:right;">0.82</div>
<div style="left:15px;top:366.0px;width:16px;height:16px;box-sizing:border-box;border:1px solid #8e8f8f;background:#fff"><div style="left:1px;top:1px;width:12px;height:12px;background:linear-gradient(135deg,#c9ced6 0%,#e4e6ea 45%,#f6f6f6 100%)"></div></div>
<div class="t" style="top:369.83px;font-size:12.6px;line-height:12.6px;color:#000;width:153px;overflow:hidden;height:16.4px;left:36px;">System</div>
<div class="t" style="top:369.83px;font-size:12.6px;line-height:12.6px;color:#000;width:43px;overflow:hidden;height:16.4px;left:196px;">4</div>
<div class="t" style="top:369.83px;font-size:12.6px;line-height:12.6px;color:#000;width:66px;overflow:hidden;height:16.4px;left:247px;">NT Kern...</div>
<div class="t" style="top:369.83px;font-size:12.6px;line-height:12.6px;color:#000;width:64px;overflow:hidden;height:16.4px;left:320px;">Running</div>
<div class="t" style="top:369.83px;font-size:12.6px;line-height:12.6px;color:#000;right:1482px;text-align:right;">209</div>
<div class="t" style="top:369.83px;font-size:12.6px;line-height:12.6px;color:#000;right:1410px;text-align:right;">1</div>
<div class="t" style="top:369.83px;font-size:12.6px;line-height:12.6px;color:#000;right:1340px;text-align:right;">0.79</div>
<div style="left:15px;top:387.0px;width:16px;height:16px;box-sizing:border-box;border:1px solid #8e8f8f;background:#fff"><div style="left:1px;top:1px;width:12px;height:12px;background:linear-gradient(135deg,#c9ced6 0%,#e4e6ea 45%,#f6f6f6 100%)"></div></div>
<div class="t" style="top:390.83px;font-size:12.6px;line-height:12.6px;color:#000;width:153px;overflow:hidden;height:16.4px;left:36px;">svchost.exe (LocalSyste...</div>
<div class="t" style="top:390.83px;font-size:12.6px;line-height:12.6px;color:#000;width:43px;overflow:hidden;height:16.4px;left:196px;">1292</div>
<div class="t" style="top:390.83px;font-size:12.6px;line-height:12.6px;color:#000;width:66px;overflow:hidden;height:16.4px;left:247px;">Host Pro...</div>
<div class="t" style="top:390.83px;font-size:12.6px;line-height:12.6px;color:#000;width:64px;overflow:hidden;height:16.4px;left:320px;">Running</div>
<div class="t" style="top:390.83px;font-size:12.6px;line-height:12.6px;color:#000;right:1482px;text-align:right;">42</div>
<div class="t" style="top:390.83px;font-size:12.6px;line-height:12.6px;color:#000;right:1410px;text-align:right;">0</div>
<div class="t" style="top:390.83px;font-size:12.6px;line-height:12.6px;color:#000;right:1340px;text-align:right;">0.77</div>
<div style="left:15px;top:408.0px;width:16px;height:16px;box-sizing:border-box;border:1px solid #8e8f8f;background:#fff"><div style="left:1px;top:1px;width:12px;height:12px;background:linear-gradient(135deg,#c9ced6 0%,#e4e6ea 45%,#f6f6f6 100%)"></div></div>
<div class="t" style="top:411.83px;font-size:12.6px;line-height:12.6px;color:#000;width:153px;overflow:hidden;height:16.4px;left:36px;">chrome.exe</div>
<div class="t" style="top:411.83px;font-size:12.6px;line-height:12.6px;color:#000;width:43px;overflow:hidden;height:16.4px;left:196px;">2956</div>
<div class="t" style="top:411.83px;font-size:12.6px;line-height:12.6px;color:#000;width:66px;overflow:hidden;height:16.4px;left:247px;">Google ...</div>
<div class="t" style="top:411.83px;font-size:12.6px;line-height:12.6px;color:#000;width:64px;overflow:hidden;height:16.4px;left:320px;">Running</div>
<div class="t" style="top:411.83px;font-size:12.6px;line-height:12.6px;color:#000;right:1482px;text-align:right;">15</div>
<div class="t" style="top:411.83px;font-size:12.6px;line-height:12.6px;color:#000;right:1410px;text-align:right;">0</div>
<div class="t" style="top:411.83px;font-size:12.6px;line-height:12.6px;color:#000;right:1340px;text-align:right;">0.74</div>
<div style="left:15px;top:429.0px;width:16px;height:16px;box-sizing:border-box;border:1px solid #8e8f8f;background:#fff"><div style="left:1px;top:1px;width:12px;height:12px;background:linear-gradient(135deg,#c9ced6 0%,#e4e6ea 45%,#f6f6f6 100%)"></div></div>
<div class="t" style="top:432.83px;font-size:12.6px;line-height:12.6px;color:#000;width:153px;overflow:hidden;height:16.4px;left:36px;">audiodg.exe</div>
<div class="t" style="top:432.83px;font-size:12.6px;line-height:12.6px;color:#000;width:43px;overflow:hidden;height:16.4px;left:196px;">8044</div>
<div class="t" style="top:432.83px;font-size:12.6px;line-height:12.6px;color:#000;width:66px;overflow:hidden;height:16.4px;left:247px;"></div>
<div class="t" style="top:432.83px;font-size:12.6px;line-height:12.6px;color:#000;width:64px;overflow:hidden;height:16.4px;left:320px;">Running</div>
<div class="t" style="top:432.83px;font-size:12.6px;line-height:12.6px;color:#000;right:1482px;text-align:right;">13</div>
<div class="t" style="top:432.83px;font-size:12.6px;line-height:12.6px;color:#000;right:1410px;text-align:right;">1</div>
<div class="t" style="top:432.83px;font-size:12.6px;line-height:12.6px;color:#000;right:1340px;text-align:right;">0.64</div>
<div style="left:15px;top:450.0px;width:16px;height:16px;box-sizing:border-box;border:1px solid #8e8f8f;background:#fff"><div style="left:1px;top:1px;width:12px;height:12px;background:linear-gradient(135deg,#c9ced6 0%,#e4e6ea 45%,#f6f6f6 100%)"></div></div>
<div class="t" style="top:453.83px;font-size:12.6px;line-height:12.6px;color:#000;width:153px;overflow:hidden;height:16.4px;left:36px;">Evernote.exe</div>
<div class="t" style="top:453.83px;font-size:12.6px;line-height:12.6px;color:#000;width:43px;overflow:hidden;height:16.4px;left:196px;">7520</div>
<div class="t" style="top:453.83px;font-size:12.6px;line-height:12.6px;color:#000;width:66px;overflow:hidden;height:16.4px;left:247px;">Evernote</div>
<div class="t" style="top:453.83px;font-size:12.6px;line-height:12.6px;color:#000;width:64px;overflow:hidden;height:16.4px;left:320px;">Running</div>
<div class="t" style="top:453.83px;font-size:12.6px;line-height:12.6px;color:#000;right:1482px;text-align:right;">51</div>
<div class="t" style="top:453.83px;font-size:12.6px;line-height:12.6px;color:#000;right:1410px;text-align:right;">0</div>
<div class="t" style="top:453.83px;font-size:12.6px;line-height:12.6px;color:#000;right:1340px;text-align:right;">0.62</div>
<div style="left:600px;top:277px;width:20px;height:185px;background:linear-gradient(90deg,#e6e6e6,#f0f0f0 40%,#f2f2f2)"></div>
<svg style="left:605px;top:285px" width="10" height="6"><path d="M0 5.5 L5 0.5 L10 5.5Z" fill="#555"/></svg>
<svg style="left:605px;top:451px" width="10" height="6"><path d="M0 0.5 L5 5.5 L10 0.5Z" fill="#6a6a6a"/></svg>
<div style="left:600px;top:299px;width:19px;height:19px;box-sizing:border-box;border:1px solid #9a9a9a;border-radius:2px;background:linear-gradient(90deg,#f4f4f4,#e8e8e8 60%,#cfcfcf)"></div>
<div style="left:605px;top:304px;width:10px;height:1.4px;background:#5a5a5a"></div>
<div style="left:605px;top:308px;width:10px;height:1.4px;background:#5a5a5a"></div>
<div style="left:605px;top:312px;width:10px;height:1.4px;background:#5a5a5a"></div>
<div style="left:8px;top:463px;width:615px;height:8px;background:#fff"></div>
<div style="left:10px;top:462px;width:611px;height:1px;background:#828790"></div>
<div style="left:10px;top:471px;width:611px;height:38px;box-sizing:border-box;border:1px solid #8b8b8b;background:linear-gradient(#fdfdfd 0%,#efefef 22%,#d6d6d6 52%,#bababa 80%,#a2a2a2 100%)"></div>
<div class="t" style="top:481.53px;font-size:16.5px;line-height:16.5px;color:#000;font-weight:700;letter-spacing:0px;left:18px;">Disk</div>
<div style="left:181px;top:481px;width:17px;height:18px;box-sizing:border-box;border:1px solid #3a8a8a;background:#fff"><div style="left:0;top:0;width:14px;height:15px;background:#006800;background-image:radial-gradient(circle,#000 0.6px,transparent 0.9px);background-size:2.5px 2.5px;"></div></div>
<div class="t" style="top:484.73px;font-size:12.6px;line-height:12.6px;color:#000;left:204px;">1 KB/sec Disk I/O</div>
<div style="left:385px;top:481px;width:17px;height:18px;box-sizing:border-box;border:1px solid #3a8a8a;background:#fff"><div style="left:0;top:0;width:14px;height:15px;background:#1010ff;background-image:radial-gradient(circle,#000 0.6px,transparent 0.9px);background-size:2.5px 2.5px;"></div></div>
<div class="t" style="top:484.73px;font-size:12.6px;line-height:12.6px;color:#000;left:408px;">1% Highest Active Time</div>
<div style="left:583px;top:477.5px;width:24px;height:24px;border-radius:12px;box-sizing:border-box;border:1px solid #9a9a9a;background:radial-gradient(circle at 50% 30%,#ffffff 0%,#eeeeee 50%,#d0d0d0 100%);box-shadow:0 1px 0 rgba(255,255,255,0.8)"></div>
<svg style="left:583px;top:477.5px" width="24" height="24" viewBox="583 477.5 24 24"><path d="M590 486.7 L595 491.7 L600 486.7" fill="none" stroke="#2a2a2a" stroke-width="2.6" stroke-linecap="round" stroke-linejoin="round"/></svg>
<div style="left:10px;top:517px;width:611px;height:38px;box-sizing:border-box;border:1px solid #8b8b8b;background:linear-gradient(#fdfdfd 0%,#efefef 22%,#d6d6d6 52%,#bababa 80%,#a2a2a2 100%)"></div>
<div class="t" style="top:527.53px;font-size:16.5px;line-height:16.5px;color:#000;font-weight:700;letter-spacing:0.6px;left:18px;">Network</div>
<div style="left:181px;top:527px;width:17px;height:18px;box-sizing:border-box;border:1px solid #3a8a8a;background:#fff"><div style="left:0;top:0;width:14px;height:15px;background:#00ff00"></div></div>
<div class="t" style="top:530.73px;font-size:12.6px;line-height:12.6px;color:#000;left:204px;">7335 Kbps Network I/O</div>
<div style="left:385px;top:527px;width:17px;height:18px;box-sizing:border-box;border:1px solid #3a8a8a;background:#fff"><div style="left:0;top:0;width:14px;height:15px;background:#1010ff;background-image:radial-gradient(circle,#000 0.6px,transparent 0.9px);background-size:2.5px 2.5px;"></div></div>
<div class="t" style="top:530.73px;font-size:12.6px;line-height:12.6px;color:#000;left:408px;">0% Network Utilization</div>
<div style="left:583px;top:523.5px;width:24px;height:24px;border-radius:12px;box-sizing:border-box;border:1px solid #9a9a9a;background:radial-gradient(circle at 50% 30%,#ffffff 0%,#eeeeee 50%,#d0d0d0 100%);box-shadow:0 1px 0 rgba(255,255,255,0.8)"></div>
<svg style="left:583px;top:523.5px" width="24" height="24" viewBox="583 523.5 24 24"><path d="M590 538.3 L595 533.3 L600 538.3" fill="none" stroke="#2a2a2a" stroke-width="2.6" stroke-linecap="round" stroke-linejoin="round"/></svg>
<div style="left:10px;top:555px;width:611px;height:186px;box-sizing:border-box;border:1px solid #828790;border-top:none;background:#fff"></div>
<div style="left:11px;top:555px;width:589px;height:22px;background:linear-gradient(#ffffff 0%,#ffffff 40%,#f3f4f7 41%,#f1f2f5 100%);border-bottom:1px solid #d8d8d8"></div>
<div style="left:510px;top:555px;width:89px;height:22px;box-sizing:border-box;border:1px solid #96d9f9;border-top:none;background:linear-gradient(#f2f9fd 0%,#f2f9fd 40%,#e0eff8 41%,#dcedf7 100%)"></div>
<svg style="left:548.5px;top:555px" width="12" height="5"><path d="M0 0 L12 0 L6 5Z" fill="#7dbce6"/></svg>
<div style="left:190px;top:555px;width:1px;height:22px;background:#e2e3e6"></div>
<div style="left:190px;top:578px;width:1px;height:162px;background:#eef4fb"></div>
<div style="left:240px;top:555px;width:1px;height:22px;background:#e2e3e6"></div>
<div style="left:240px;top:578px;width:1px;height:162px;background:#eef4fb"></div>
<div style="left:331px;top:555px;width:1px;height:22px;background:#e2e3e6"></div>
<div style="left:331px;top:578px;width:1px;height:162px;background:#eef4fb"></div>
<div style="left:420px;top:555px;width:1px;height:22px;background:#e2e3e6"></div>
<div style="left:420px;top:578px;width:1px;height:162px;background:#eef4fb"></div>
<div style="left:510px;top:578px;width:1px;height:162px;background:#eef4fb"></div>
<div class="t" style="top:561.53px;font-size:12.6px;line-height:12.6px;color:#000;left:17px;">Image</div>
<div class="t" style="top:561.53px;font-size:12.6px;line-height:12.6px;color:#000;left:196px;">PID</div>
<div class="t" style="top:561.53px;font-size:12.6px;line-height:12.6px;color:#000;left:247px;">Address</div>
<div class="t" style="top:561.53px;font-size:12.6px;line-height:12.6px;color:#000;right:1516px;text-align:right;">Send (B/sec)</div>
<div class="t" style="top:561.53px;font-size:12.6px;line-height:12.6px;color:#000;right:1427px;text-align:right;">Receive (B/...</div>
<div class="t" style="top:561.53px;font-size:12.6px;line-height:12.6px;color:#000;right:1339px;text-align:right;">Total (B/sec)</div>
<div class="t" style="top:584.83px;font-size:12.6px;line-height:12.6px;color:#000;width:172px;overflow:hidden;height:16.4px;left:17px;">thinkorswim.exe</div>
<div class="t" style="top:584.83px;font-size:12.6px;line-height:12.6px;color:#000;width:43px;overflow:hidden;height:16.4px;left:196px;">6052</div>
<div class="t" style="top:584.83px;font-size:12.6px;line-height:12.6px;color:#000;width:83px;overflow:hidden;height:16.4px;left:247px;">192.229.21...</div>
<div class="t" style="top:584.83px;font-size:12.6px;line-height:12.6px;color:#000;right:1519px;text-align:right;">169</div>
<div class="t" style="top:584.83px;font-size:12.6px;line-height:12.6px;color:#000;right:1429px;text-align:right;">239,410</div>
<div class="t" style="top:584.83px;font-size:12.6px;line-height:12.6px;color:#000;right:1340px;text-align:right;">239,579</div>
<div class="t" style="top:605.83px;font-size:12.6px;line-height:12.6px;color:#000;width:172px;overflow:hidden;height:16.4px;left:17px;">thinkorswim.exe</div>
<div class="t" style="top:605.83px;font-size:12.6px;line-height:12.6px;color:#000;width:43px;overflow:hidden;height:16.4px;left:196px;">6052</div>
<div class="t" style="top:605.83px;font-size:12.6px;line-height:12.6px;color:#000;width:83px;overflow:hidden;height:16.4px;left:247px;">c6c8:aabb::</div>
<div class="t" style="top:605.83px;font-size:12.6px;line-height:12.6px;color:#000;right:1519px;text-align:right;">87</div>
<div class="t" style="top:605.83px;font-size:12.6px;line-height:12.6px;color:#000;right:1429px;text-align:right;">31,649</div>
<div class="t" style="top:605.83px;font-size:12.6px;line-height:12.6px;color:#000;right:1340px;text-align:right;">31,736</div>
<div class="t" style="top:626.83px;font-size:12.6px;line-height:12.6px;color:#000;width:172px;overflow:hidden;height:16.4px;left:17px;">svchost.exe (LocalService)</div>
<div class="t" style="top:626.83px;font-size:12.6px;line-height:12.6px;color:#000;width:43px;overflow:hidden;height:16.4px;left:196px;">1316</div>
<div class="t" style="top:626.83px;font-size:12.6px;line-height:12.6px;color:#000;width:83px;overflow:hidden;height:16.4px;left:247px;">Fios_Quant...</div>
<div class="t" style="top:626.83px;font-size:12.6px;line-height:12.6px;color:#000;right:1519px;text-align:right;">563</div>
<div class="t" style="top:626.83px;font-size:12.6px;line-height:12.6px;color:#000;right:1429px;text-align:right;">5,606</div>
<div class="t" style="top:626.83px;font-size:12.6px;line-height:12.6px;color:#000;right:1340px;text-align:right;">6,169</div>
<div class="t" style="top:647.83px;font-size:12.6px;line-height:12.6px;color:#000;width:172px;overflow:hidden;height:16.4px;left:17px;">System</div>
<div class="t" style="top:647.83px;font-size:12.6px;line-height:12.6px;color:#000;width:43px;overflow:hidden;height:16.4px;left:196px;">4</div>
<div class="t" style="top:647.83px;font-size:12.6px;line-height:12.6px;color:#000;width:83px;overflow:hidden;height:16.4px;left:247px;">Fios_Quant...</div>
<div class="t" style="top:647.83px;font-size:12.6px;line-height:12.6px;color:#000;right:1519px;text-align:right;">125</div>
<div class="t" style="top:647.83px;font-size:12.6px;line-height:12.6px;color:#000;right:1429px;text-align:right;">705</div>
<div class="t" style="top:647.83px;font-size:12.6px;line-height:12.6px;color:#000;right:1340px;text-align:right;">830</div>
<div class="t" style="top:668.83px;font-size:12.6px;line-height:12.6px;color:#000;width:172px;overflow:hidden;height:16.4px;left:17px;">svchost.exe (LocalServiceAn...</div>
<div class="t" style="top:668.83px;font-size:12.6px;line-height:12.6px;color:#000;width:43px;overflow:hidden;height:16.4px;left:196px;">5780</div>
<div class="t" style="top:668.83px;font-size:12.6px;line-height:12.6px;color:#000;width:83px;overflow:hidden;height:16.4px;left:247px;">ff02::c</div>
<div class="t" style="top:668.83px;font-size:12.6px;line-height:12.6px;color:#000;right:1519px;text-align:right;">0</div>
<div class="t" style="top:668.83px;font-size:12.6px;line-height:12.6px;color:#000;right:1429px;text-align:right;">729</div>
<div class="t" style="top:668.83px;font-size:12.6px;line-height:12.6px;color:#000;right:1340px;text-align:right;">729</div>
<div class="t" style="top:689.83px;font-size:12.6px;line-height:12.6px;color:#000;width:172px;overflow:hidden;height:16.4px;left:17px;">svchost.exe (LocalServiceAn...</div>
<div class="t" style="top:689.83px;font-size:12.6px;line-height:12.6px;color:#000;width:43px;overflow:hidden;height:16.4px;left:196px;">5780</div>
<div class="t" style="top:689.83px;font-size:12.6px;line-height:12.6px;color:#000;width:83px;overflow:hidden;height:16.4px;left:247px;">239.255.25...</div>
<div class="t" style="top:689.83px;font-size:12.6px;line-height:12.6px;color:#000;right:1519px;text-align:right;">212</div>
<div class="t" style="top:689.83px;font-size:12.6px;line-height:12.6px;color:#000;right:1429px;text-align:right;">512</div>
<div class="t" style="top:689.83px;font-size:12.6px;line-height:12.6px;color:#000;right:1340px;text-align:right;">723</div>
<div class="t" style="top:710.83px;font-size:12.6px;line-height:12.6px;color:#000;width:172px;overflow:hidden;height:16.4px;left:17px;">chrome.exe</div>
<div class="t" style="top:710.83px;font-size:12.6px;line-height:12.6px;color:#000;width:43px;overflow:hidden;height:16.4px;left:196px;">6936</div>
<div class="t" style="top:710.83px;font-size:12.6px;line-height:12.6px;color:#000;width:83px;overflow:hidden;height:16.4px;left:247px;">lga25s61-in...</div>
<div class="t" style="top:710.83px;font-size:12.6px;line-height:12.6px;color:#000;right:1519px;text-align:right;">660</div>
<div class="t" style="top:710.83px;font-size:12.6px;line-height:12.6px;color:#000;right:1429px;text-align:right;">0</div>
<div class="t" style="top:710.83px;font-size:12.6px;line-height:12.6px;color:#000;right:1340px;text-align:right;">660</div>
<div class="t" style="top:731.83px;font-size:12.6px;line-height:12.6px;color:#000;width:172px;overflow:hidden;height:16.4px;left:17px;">svchost.exe (LocalService)</div>
<div class="t" style="top:731.83px;font-size:12.6px;line-height:12.6px;color:#000;width:43px;overflow:hidden;height:16.4px;left:196px;">1316</div>
<div class="t" style="top:731.83px;font-size:12.6px;line-height:12.6px;color:#000;width:83px;overflow:hidden;height:16.4px;left:247px;">ff02::c</div>
<div class="t" style="top:731.83px;font-size:12.6px;line-height:12.6px;color:#000;right:1519px;text-align:right;">0</div>
<div class="t" style="top:731.83px;font-size:12.6px;line-height:12.6px;color:#000;right:1429px;text-align:right;">605</div>
<div class="t" style="top:731.83px;font-size:12.6px;line-height:12.6px;color:#000;right:1340px;text-align:right;">605</div>
<div style="left:600px;top:555px;width:20px;height:185px;background:linear-gradient(90deg,#e6e6e6,#f0f0f0 40%,#f2f2f2)"></div>
<svg style="left:605px;top:563px" width="10" height="6"><path d="M0 5.5 L5 0.5 L10 5.5Z" fill="#555"/></svg>
<svg style="left:605px;top:729px" width="10" height="6"><path d="M0 0.5 L5 5.5 L10 0.5Z" fill="#6a6a6a"/></svg>
<div style="left:600px;top:577px;width:19px;height:19px;box-sizing:border-box;border:1px solid #9a9a9a;border-radius:2px;background:linear-gradient(90deg,#f4f4f4,#e8e8e8 60%,#cfcfcf)"></div>
<div style="left:605px;top:582px;width:10px;height:1.4px;background:#5a5a5a"></div>
<div style="left:605px;top:586px;width:10px;height:1.4px;background:#5a5a5a"></div>
<div style="left:605px;top:590px;width:10px;height:1.4px;background:#5a5a5a"></div>
<div style="left:9px;top:741px;width:614px;height:8px;background:#fff"></div>
<div style="left:10px;top:740px;width:611px;height:1px;background:#828790"></div>
<div style="left:10px;top:749px;width:611px;height:38px;box-sizing:border-box;border:1px solid #8b8b8b;background:linear-gradient(#fdfdfd 0%,#efefef 22%,#d6d6d6 52%,#bababa 80%,#a2a2a2 100%)"></div>
<div class="t" style="top:759.53px;font-size:16.5px;line-height:16.5px;color:#000;font-weight:700;letter-spacing:0.5px;left:18px;">Memory</div>
<div style="left:181px;top:759px;width:17px;height:18px;box-sizing:border-box;border:1px solid #3a8a8a;background:#fff"><div style="left:0;top:0;width:14px;height:15px;background:#006800;background-image:radial-gradient(circle,#000 0.6px,transparent 0.9px);background-size:2.5px 2.5px;"></div></div>
<div class="t" style="top:762.73px;font-size:12.6px;line-height:12.6px;color:#000;left:204px;">0 Hard Faults/sec</div>
<div style="left:385px;top:759px;width:17px;height:18px;box-sizing:border-box;border:1px solid #3a8a8a;background:#fff"><div style="left:0;top:0;width:14px;height:15px;background:#7ab4f4"></div><div style="left:0;top:0;width:14px;height:7px;background:#1010ff;background-image:radial-gradient(circle,#000 0.6px,transparent 0.9px);background-size:2.5px 2.5px;"></div></div>
<div class="t" style="top:762.73px;font-size:12.6px;line-height:12.6px;color:#000;left:408px;">49% Used Physical Memo...</div>
<div style="left:583px;top:755.5px;width:24px;height:24px;border-radius:12px;box-sizing:border-box;border:1px solid #9a9a9a;background:radial-gradient(circle at 50% 30%,#ffffff 0%,#eeeeee 50%,#d0d0d0 100%);box-shadow:0 1px 0 rgba(255,255,255,0.8)"></div>
<svg style="left:583px;top:755.5px" width="24" height="24" viewBox="583 755.5 24 24"><path d="M590 764.7 L595 769.7 L600 764.7" fill="none" stroke="#2a2a2a" stroke-width="2.6" stroke-linecap="round" stroke-linejoin="round"/></svg>
<div style="left:651px;top:239px;width:250px;height:753px;box-sizing:border-box;border:1px solid #8b8b8b;background:#fff"></div>
<div style="left:651px;top:239px;width:250px;height:38px;box-sizing:border-box;border:1px solid #8b8b8b;background:linear-gradient(#fdfdfd 0%,#efefef 22%,#d6d6d6 52%,#bababa 80%,#a2a2a2 100%)"></div>
<div style="left:665px;top:246px;width:24px;height:24px;border-radius:12px;box-sizing:border-box;border:1px solid #9a9a9a;background:radial-gradient(circle at 50% 30%,#ffffff 0%,#eeeeee 50%,#d0d0d0 100%);box-shadow:0 1px 0 rgba(255,255,255,0.8)"></div>
<svg style="left:665px;top:246px" width="24" height="24" viewBox="665 246 24 24"><path d="M674.5 253 L679.5 258 L674.5 263" fill="none" stroke="#2a2a2a" stroke-width="2.6" stroke-linecap="round" stroke-linejoin="round"/></svg>
<div style="left:775px;top:242px;width:107px;height:31px;box-sizing:border-box;border:1px solid #7a7a7a;border-radius:3px;background:linear-gradient(#f6f6f6 0%,#ececec 48%,#dedede 52%,#d2d2d2 100%)"></div>
<div style="left:864px;top:247px;width:1px;height:22px;background:#6f6f6f"></div>
<svg style="left:867px;top:255px" width="11" height="7"><path d="M0 0.5 L11 0.5 L5.5 6.5Z" fill="#111"/></svg>
<div class="t" style="top:251.40px;font-size:14.3px;line-height:14.3px;color:#000;left:800px;">Views</div>
<div class="t" style="top:438.61px;font-size:14.4px;line-height:14.4px;color:#000;left:667px;">60 Seconds</div>
<div class="t" style="top:285.81px;font-size:14.4px;line-height:14.4px;color:#000;left:667px;">CPU</div>
<div class="t" style="top:285.81px;font-size:14.4px;line-height:14.4px;color:#000;right:1056px;text-align:right;">100%</div>
<div class="t" style="top:438.31px;font-size:14.4px;line-height:14.4px;color:#000;right:1056px;text-align:right;">0%</div>
<div style="left:665px;top:305px;width:214px;height:128px;box-sizing:border-box;border-top:2px solid #8a8a8a;border-left:2px solid #8a8a8a;border-right:1px solid #f4f4f4;border-bottom:1px solid #f4f4f4"></div>
<svg style="left:667px;top:307px" width="212" height="126" viewBox="0 0 212 126"><rect width="212" height="126" fill="#000"/><path d="M4.5 0V126M24.5 0V126M44.5 0V126M64.5 0V126M84.5 0V126M104.5 0V126M124.5 0V126M144.5 0V126M164.5 0V126M184.5 0V126M204.5 0V126M0 13.5H212M0 26.5H212M0 38.5H212M0 50.5H212M0 63.5H212M0 76.5H212M0 88.5H212M0 100.5H212M0 113.5H212" stroke="#008000" stroke-width="1"/><path d="M-0.3 87.6 L4.4 87.6 L7.3 81.4 L9.2 85.3 L11.2 95.7 L15.7 103.5 L19.6 103.5 L27.4 96.3 L30.7 100.9 L34.6 102.6 L38.5 100.4 L42.4 100.9 L45.0 100.4 L51.5 88.5 L55.4 99.6 L59.5 104.5 L63.6 89.2 L67.1 100.9 L71.0 99.6 L77.5 100.9 L82.7 100.9 L84.6 88.5 L87.5 69.4 L91.5 86.3 L95.7 83.3 L99.6 73.6 L103.5 78.1 L107.4 103.5 L111.3 89.2 L119.1 95.7 L126.9 98.9 L131.4 105.4 L136.0 86.6 L139.6 80.3 L143.8 103.5 L150.9 99.3 L155.5 104.8 L163.3 93.7 L167.2 103.5 L171.1 89.2 L175.6 99.6 L182.8 102.2 L186.7 100.4 L190.6 100.9 L195.8 98.5 L199.7 98.9 L203.6 88.5 L206.8 100.6 L211.1 99.6 L212 126 L0 126Z" fill="#005c00"/><clipPath id="c667_307"><path d="M-0.3 87.6 L4.4 87.6 L7.3 81.4 L9.2 85.3 L11.2 95.7 L15.7 103.5 L19.6 103.5 L27.4 96.3 L30.7 100.9 L34.6 102.6 L38.5 100.4 L42.4 100.9 L45.0 100.4 L51.5 88.5 L55.4 99.6 L59.5 104.5 L63.6 89.2 L67.1 100.9 L71.0 99.6 L77.5 100.9 L82.7 100.9 L84.6 88.5 L87.5 69.4 L91.5 86.3 L95.7 83.3 L99.6 73.6 L103.5 78.1 L107.4 103.5 L111.3 89.2 L119.1 95.7 L126.9 98.9 L131.4 105.4 L136.0 86.6 L139.6 80.3 L143.8 103.5 L150.9 99.3 L155.5 104.8 L163.3 93.7 L167.2 103.5 L171.1 89.2 L175.6 99.6 L182.8 102.2 L186.7 100.4 L190.6 100.9 L195.8 98.5 L199.7 98.9 L203.6 88.5 L206.8 100.6 L211.1 99.6 L212 126 L0 126Z"/></clipPath><path d="M4.5 0V126M24.5 0V126M44.5 0V126M64.5 0V126M84.5 0V126M104.5 0V126M124.5 0V126M144.5 0V126M164.5 0V126M184.5 0V126M204.5 0V126M0 13.5H212M0 26.5H212M0 38.5H212M0 50.5H212M0 63.5H212M0 76.5H212M0 88.5H212M0 100.5H212M0 113.5H212" stroke="#00d800" stroke-width="1" clip-path="url(#c667_307)"/><path d="M-0.3 87.6 L4.4 87.6 L7.3 81.4 L9.2 85.3 L11.2 95.7 L15.7 103.5 L19.6 103.5 L27.4 96.3 L30.7 100.9 L34.6 102.6 L38.5 100.4 L42.4 100.9 L45.0 100.4 L51.5 88.5 L55.4 99.6 L59.5 104.5 L63.6 89.2 L67.1 100.9 L71.0 99.6 L77.5 100.9 L82.7 100.9 L84.6 88.5 L87.5 69.4 L91.5 86.3 L95.7 83.3 L99.6 73.6 L103.5 78.1 L107.4 103.5 L111.3 89.2 L119.1 95.7 L126.9 98.9 L131.4 105.4 L136.0 86.6 L139.6 80.3 L143.8 103.5 L150.9 99.3 L155.5 104.8 L163.3 93.7 L167.2 103.5 L171.1 89.2 L175.6 99.6 L182.8 102.2 L186.7 100.4 L190.6 100.9 L195.8 98.5 L199.7 98.9 L203.6 88.5 L206.8 100.6 L211.1 99.6" fill="none" stroke="#00ff00" stroke-width="1.2" stroke-linejoin="miter"/><rect x="0" y="0" width="212" height="2" fill="#3a64f4"/><rect x="0" y="2" width="212" height="1" fill="#200020"/></svg>
<svg style="left:0;top:0" width="931" height="1077"><path d="M881 291.5 H888.5 V448 H881" fill="none" stroke="#111" stroke-width="1.5"/></svg>
<div class="t" style="top:461.81px;font-size:14.4px;line-height:14.4px;color:#000;left:667px;">Disk</div>
<div class="t" style="top:461.81px;font-size:14.4px;line-height:14.4px;color:#000;right:1056px;text-align:right;">1 MB/sec</div>
<div class="t" style="top:614.31px;font-size:14.4px;line-height:14.4px;color:#000;right:1056px;text-align:right;">0</div>
<div style="left:665px;top:481px;width:214px;height:128px;box-sizing:border-box;border-top:2px solid #8a8a8a;border-left:2px solid #8a8a8a;border-right:1px solid #f4f4f4;border-bottom:1px solid #f4f4f4"></div>
<svg style="left:667px;top:483px" width="212" height="126" viewBox="0 0 212 126"><rect width="212" height="126" fill="#000"/><path d="M4.5 0V126M24.5 0V126M44.5 0V126M64.5 0V126M84.5 0V126M104.5 0V126M124.5 0V126M144.5 0V126M164.5 0V126M184.5 0V126M204.5 0V126M0 13.5H212M0 26.5H212M0 38.5H212M0 50.5H212M0 63.5H212M0 76.5H212M0 88.5H212M0 100.5H212M0 113.5H212" stroke="#008000" stroke-width="1"/><path d="M-0.3 93.4 L3.1 93.4 L6.0 109.0 L7.3 125.2 L8.6 110.3 L11.4 86.2 L13.8 110.3 L15.7 125.2 L19.6 115.5 L23.1 114.8 L24.8 70.0 L26.8 15.4 L27.6 -0.8 L28.7 47.9 L30.4 79.1 L31.7 125.2 L34.6 122.0 L38.5 123.3 L43.7 107.7 L46.9 118.1 L51.5 103.8 L55.4 125.2 L59.3 120.7 L63.2 125.2 L67.7 122.0 L71.0 125.2 L75.5 96.0 L78.8 125.2 L82.7 106.4 L84.6 28.4 L85.3 -0.8 L89.2 -0.8 L90.5 40.1 L91.8 96.0 L95.0 125.2 L103.5 103.8 L107.4 109.0 L111.9 125.2 L115.8 90.1 L119.7 125.2 L123.0 113.5 L126.9 125.2 L131.4 120.7 L136.0 125.2 L139.2 90.8 L143.8 83.0 L147.0 125.2 L151.6 125.2 L155.5 122.0 L159.4 125.2 L163.3 102.5 L167.2 116.8 L172.4 125.2 L177.6 122.6 L184.1 121.3 L190.6 125.2 L195.8 123.3 L199.7 125.2 L203.6 99.9 L207.5 125.2 L211.1 125.2 L212 126 L0 126Z" fill="#005c00"/><clipPath id="c667_483"><path d="M-0.3 93.4 L3.1 93.4 L6.0 109.0 L7.3 125.2 L8.6 110.3 L11.4 86.2 L13.8 110.3 L15.7 125.2 L19.6 115.5 L23.1 114.8 L24.8 70.0 L26.8 15.4 L27.6 -0.8 L28.7 47.9 L30.4 79.1 L31.7 125.2 L34.6 122.0 L38.5 123.3 L43.7 107.7 L46.9 118.1 L51.5 103.8 L55.4 125.2 L59.3 120.7 L63.2 125.2 L67.7 122.0 L71.0 125.2 L75.5 96.0 L78.8 125.2 L82.7 106.4 L84.6 28.4 L85.3 -0.8 L89.2 -0.8 L90.5 40.1 L91.8 96.0 L95.0 125.2 L103.5 103.8 L107.4 109.0 L111.9 125.2 L115.8 90.1 L119.7 125.2 L123.0 113.5 L126.9 125.2 L131.4 120.7 L136.0 125.2 L139.2 90.8 L143.8 83.0 L147.0 125.2 L151.6 125.2 L155.5 122.0 L159.4 125.2 L163.3 102.5 L167.2 116.8 L172.4 125.2 L177.6 122.6 L184.1 121.3 L190.6 125.2 L195.8 123.3 L199.7 125.2 L203.6 99.9 L207.5 125.2 L211.1 125.2 L212 126 L0 126Z"/></clipPath><path d="M4.5 0V126M24.5 0V126M44.5 0V126M64.5 0V126M84.5 0V126M104.5 0V126M124.5 0V126M144.5 0V126M164.5 0V126M184.5 0V126M204.5 0V126M0 13.5H212M0 26.5H212M0 38.5H212M0 50.5H212M0 63.5H212M0 76.5H212M0 88.5H212M0 100.5H212M0 113.5H212" stroke="#00d800" stroke-width="1" clip-path="url(#c667_483)"/><path d="M-0.3 93.4 L3.1 93.4 L6.0 109.0 L7.3 125.2 L8.6 110.3 L11.4 86.2 L13.8 110.3 L15.7 125.2 L19.6 115.5 L23.1 114.8 L24.8 70.0 L26.8 15.4 L27.6 -0.8 L28.7 47.9 L30.4 79.1 L31.7 125.2 L34.6 122.0 L38.5 123.3 L43.7 107.7 L46.9 118.1 L51.5 103.8 L55.4 125.2 L59.3 120.7 L63.2 125.2 L67.7 122.0 L71.0 125.2 L75.5 96.0 L78.8 125.2 L82.7 106.4 L84.6 28.4 L85.3 -0.8 L89.2 -0.8 L90.5 40.1 L91.8 96.0 L95.0 125.2 L103.5 103.8 L107.4 109.0 L111.9 125.2 L115.8 90.1 L119.7 125.2 L123.0 113.5 L126.9 125.2 L131.4 120.7 L136.0 125.2 L139.2 90.8 L143.8 83.0 L147.0 125.2 L151.6 125.2 L155.5 122.0 L159.4 125.2 L163.3 102.5 L167.2 116.8 L172.4 125.2 L177.6 122.6 L184.1 121.3 L190.6 125.2 L195.8 123.3 L199.7 125.2 L203.6 99.9 L207.5 125.2 L211.1 125.2" fill="none" stroke="#00ff00" stroke-width="1.2" stroke-linejoin="miter"/><path d="M0.0 126.0 L20.0 126.0 L24.0 124.0 L28.0 126.0 L85.0 126.0 L88.0 118.0 L92.0 126.0 L200.0 126.0 L212.0 126.0" fill="none" stroke="#4060ff" stroke-width="2" stroke-linejoin="miter"/></svg>
<svg style="left:0;top:0" width="931" height="1077"><path d="M881 467.5 H888.5 V624 H881" fill="none" stroke="#111" stroke-width="1.5"/></svg>
<div class="t" style="top:637.81px;font-size:14.4px;line-height:14.4px;color:#000;left:667px;">Network</div>
<div class="t" style="top:637.81px;font-size:14.4px;line-height:14.4px;color:#000;right:1056px;text-align:right;">1 Mbps</div>
<div class="t" style="top:790.31px;font-size:14.4px;line-height:14.4px;color:#000;right:1056px;text-align:right;">0</div>
<div style="left:665px;top:657px;width:214px;height:128px;box-sizing:border-box;border-top:2px solid #8a8a8a;border-left:2px solid #8a8a8a;border-right:1px solid #f4f4f4;border-bottom:1px solid #f4f4f4"></div>
<svg style="left:667px;top:659px" width="212" height="126" viewBox="0 0 212 126"><rect width="212" height="126" fill="#000"/><path d="M4.5 0V126M24.5 0V126M44.5 0V126M64.5 0V126M84.5 0V126M104.5 0V126M124.5 0V126M144.5 0V126M164.5 0V126M184.5 0V126M204.5 0V126M0 13.5H212M0 26.5H212M0 38.5H212M0 50.5H212M0 63.5H212M0 76.5H212M0 88.5H212M0 100.5H212M0 113.5H212" stroke="#008000" stroke-width="1"/><path d="M-0.3 0.1 L6.6 0.1 L7.3 82.0 L7.9 0.1 L15.1 0.1 L15.7 98.9 L19.6 80.7 L27.4 98.9 L31.3 87.2 L31.6 0.1 L39.1 0.1 L39.5 91.7 L40.0 0.1 L46.9 0.1 L47.6 80.7 L51.5 46.2 L55.4 58.6 L59.5 46.9 L63.2 79.4 L63.8 0.1 L71.0 0.1 L71.4 106.7 L71.8 0.1 L79.4 0.1 L79.8 98.9 L84.0 82.0 L86.6 89.8 L91.8 80.7 L95.7 98.9 L96.1 0.1 L103.2 0.1 L103.5 20.9 L104.1 0.1 L111.3 0.1 L111.9 100.2 L115.8 78.1 L119.1 91.1 L123.6 97.6 L124.0 0.1 L130.8 0.1 L131.4 95.0 L135.3 102.8 L136.0 0.1 L143.1 0.1 L144.0 109.3 L147.7 108.0 L151.6 88.5 L159.4 105.4 L159.8 0.1 L166.5 0.1 L167.2 92.4 L171.7 100.2 L172.1 0.1 L179.1 0.1 L179.5 104.1 L184.1 109.3 L187.3 84.6 L191.9 76.8 L192.1 0.1 L199.4 0.1 L199.7 95.0 L203.6 65.1 L204.2 0.1 L211.1 0.1 L212 126 L0 126Z" fill="#005c00"/><clipPath id="c667_659"><path d="M-0.3 0.1 L6.6 0.1 L7.3 82.0 L7.9 0.1 L15.1 0.1 L15.7 98.9 L19.6 80.7 L27.4 98.9 L31.3 87.2 L31.6 0.1 L39.1 0.1 L39.5 91.7 L40.0 0.1 L46.9 0.1 L47.6 80.7 L51.5 46.2 L55.4 58.6 L59.5 46.9 L63.2 79.4 L63.8 0.1 L71.0 0.1 L71.4 106.7 L71.8 0.1 L79.4 0.1 L79.8 98.9 L84.0 82.0 L86.6 89.8 L91.8 80.7 L95.7 98.9 L96.1 0.1 L103.2 0.1 L103.5 20.9 L104.1 0.1 L111.3 0.1 L111.9 100.2 L115.8 78.1 L119.1 91.1 L123.6 97.6 L124.0 0.1 L130.8 0.1 L131.4 95.0 L135.3 102.8 L136.0 0.1 L143.1 0.1 L144.0 109.3 L147.7 108.0 L151.6 88.5 L159.4 105.4 L159.8 0.1 L166.5 0.1 L167.2 92.4 L171.7 100.2 L172.1 0.1 L179.1 0.1 L179.5 104.1 L184.1 109.3 L187.3 84.6 L191.9 76.8 L192.1 0.1 L199.4 0.1 L199.7 95.0 L203.6 65.1 L204.2 0.1 L211.1 0.1 L212 126 L0 126Z"/></clipPath><path d="M4.5 0V126M24.5 0V126M44.5 0V126M64.5 0V126M84.5 0V126M104.5 0V126M124.5 0V126M144.5 0V126M164.5 0V126M184.5 0V126M204.5 0V126M0 13.5H212M0 26.5H212M0 38.5H212M0 50.5H212M0 63.5H212M0 76.5H212M0 88.5H212M0 100.5H212M0 113.5H212" stroke="#00d800" stroke-width="1" clip-path="url(#c667_659)"/><path d="M-0.3 0.1 L6.6 0.1 L7.3 82.0 L7.9 0.1 L15.1 0.1 L15.7 98.9 L19.6 80.7 L27.4 98.9 L31.3 87.2 L31.6 0.1 L39.1 0.1 L39.5 91.7 L40.0 0.1 L46.9 0.1 L47.6 80.7 L51.5 46.2 L55.4 58.6 L59.5 46.9 L63.2 79.4 L63.8 0.1 L71.0 0.1 L71.4 106.7 L71.8 0.1 L79.4 0.1 L79.8 98.9 L84.0 82.0 L86.6 89.8 L91.8 80.7 L95.7 98.9 L96.1 0.1 L103.2 0.1 L103.5 20.9 L104.1 0.1 L111.3 0.1 L111.9 100.2 L115.8 78.1 L119.1 91.1 L123.6 97.6 L124.0 0.1 L130.8 0.1 L131.4 95.0 L135.3 102.8 L136.0 0.1 L143.1 0.1 L144.0 109.3 L147.7 108.0 L151.6 88.5 L159.4 105.4 L159.8 0.1 L166.5 0.1 L167.2 92.4 L171.7 100.2 L172.1 0.1 L179.1 0.1 L179.5 104.1 L184.1 109.3 L187.3 84.6 L191.9 76.8 L192.1 0.1 L199.4 0.1 L199.7 95.0 L203.6 65.1 L204.2 0.1 L211.1 0.1" fill="none" stroke="#00ff00" stroke-width="1.2" stroke-linejoin="miter"/><path d="M49 126 L53.5 122.2 L58 126Z" fill="#4060ff"/><path d="M66 126 L67.5 124.5 L69 126Z" fill="#4060ff"/></svg>
<svg style="left:0;top:0" width="931" height="1077"><path d="M881 643.5 H888.5 V800 H881" fill="none" stroke="#111" stroke-width="1.5"/></svg>
<div class="t" style="top:813.81px;font-size:14.4px;line-height:14.4px;color:#000;left:667px;">Memory</div>
<div class="t" style="top:813.81px;font-size:14.4px;line-height:14.4px;color:#000;right:1056px;text-align:right;">100 Hard Faults/sec</div>
<div class="t" style="top:966.31px;font-size:14.4px;line-height:14.4px;color:#000;right:1056px;text-align:right;">0</div>
<div style="left:665px;top:833px;width:214px;height:128px;box-sizing:border-box;border-top:2px solid #8a8a8a;border-left:2px solid #8a8a8a;border-right:1px solid #f4f4f4;border-bottom:1px solid #f4f4f4"></div>
<svg style="left:667px;top:835px" width="212" height="126" viewBox="0 0 212 126"><rect width="212" height="126" fill="#000"/><path d="M4.5 0V126M24.5 0V126M44.5 0V126M64.5 0V126M84.5 0V126M104.5 0V126M124.5 0V126M144.5 0V126M164.5 0V126M184.5 0V126M204.5 0V126M0 13.5H212M0 26.5H212M0 38.5H212M0 50.5H212M0 63.5H212M0 76.5H212M0 88.5H212M0 100.5H212M0 113.5H212" stroke="#008000" stroke-width="1"/><path d="M0.0 65.5 L212.0 65.5" fill="none" stroke="#3a50f0" stroke-width="2.6" stroke-linejoin="miter"/></svg>
<svg style="left:0;top:0" width="931" height="1077"><path d="M881 819.5 H888.5 V976 H881" fill="none" stroke="#111" stroke-width="1.5"/></svg>
<div style="left:1396px;top:412px;width:525px;height:668px;box-sizing:border-box;border:1px solid #8d8f92;border-radius:6px 6px 5px 5px;background:#0b0c0e"></div>
<div style="left:1397px;top:413px;width:523px;height:32px;border-radius:5px 5px 0 0;background:linear-gradient(90deg,#2a2c2f 0%,#0d0e10 8%,#16181a 35%,#0a0b0d 62%,#1f2225 80%,#34373a 92%,#36393c 100%)"></div>
<div style="left:1397px;top:445px;width:5px;height:160px;background:linear-gradient(#2a2c2f,#0b0c0e)"></div>
<div style="left:1920px;top:445px;width:0px;height:220px;background:linear-gradient(#36393c,#0b0c0e)"></div>
<div style="left:1407.5px;top:416.4px;width:214px;height:26px;border-radius:13px;background:rgba(150,152,155,0.75);filter:blur(7px)"></div>
<div style="left:1402px;top:445px;width:518px;height:628px;box-sizing:border-box;border:1px solid #8f9194;border-radius:2px;background:#000"></div>
<div style="left:1403px;top:446px;width:516px;height:626px;box-sizing:border-box;border:1px solid #0c0d0e;background:#f0f0f0"></div>
<div class="t" style="top:422.04px;font-size:14.6px;line-height:14.6px;color:#000;left:1429.5px;">TechPowerUp GPU-Z 2.27.0</div>
<div style="left:1920px;top:400px;width:11px;height:677px;background:#000"></div>
<svg style="left:1403px;top:419px" width="22" height="19" viewBox="0 0 22 19"><defs><linearGradient id="pcb" x1="0" y1="0" x2="0" y2="1"><stop offset="0" stop-color="#7cd060"/><stop offset="1" stop-color="#4fa83a"/></linearGradient><radialGradient id="chip" cx="40%" cy="35%" r="70%"><stop offset="0" stop-color="#f4f4f4"/><stop offset="1" stop-color="#8a8a8a"/></radialGradient></defs><path d="M1.5 1.5 H3 V18" fill="none" stroke="#d8d8d8" stroke-width="1.2"/><rect x="3.5" y="4" width="18" height="12" fill="url(#pcb)"/><rect x="4" y="15" width="13" height="2.5" fill="#c8e030"/><rect x="8.5" y="7" width="5" height="5" fill="url(#chip)"/><rect x="5" y="5" width="1.5" height="1" fill="#e02020"/></svg>
<div style="left:1791px;top:412px;width:130px;height:24.5px;box-sizing:border-box;border:1px solid #9c9ea0;border-radius:0 0 6px 6px;background:#1e2124"></div>
<div style="left:1793px;top:412px;width:34.5px;height:22.5px;box-sizing:border-box;border:1px solid #9c9ea0;border-radius:0 0 0 5px;background:linear-gradient(#2a2d30,#222528)"></div>
<div style="left:1827.5px;top:412px;width:33.09999999999991px;height:22.5px;box-sizing:border-box;border:1px solid #9c9ea0;border-radius:0;background:linear-gradient(#2a2d30,#222528)"></div>
<div style="left:1860.6px;top:412px;width:58.40000000000009px;height:22.5px;box-sizing:border-box;border:1px solid #9c9ea0;border-radius:0 0 5px 0;background:linear-gradient(#2a2d30,#222528)"></div>
<div style="left:1802px;top:426.4px;width:16px;height:4px;background:#f4f4f4"></div>
<div style="left:1833.4px;top:417.6px;width:17px;height:13px;box-sizing:border-box;border:3px solid #8a8a8a;border-top-width:4px"></div>
<svg style="left:1882.5px;top:417.6px" width="14" height="13" viewBox="0 0 14 13"><path d="M1.5 1 L12.5 12 M12.5 1 L1.5 12" stroke="#f0f0f0" stroke-width="3.2" stroke-linecap="square"/></svg>
<div style="left:1410px;top:476px;width:502px;height:557px;background:#f0f0f0;box-sizing:border-box;border:1px solid #898c95"></div>
<div style="left:1412.4px;top:455px;width:96.09999999999991px;height:21.5px;box-sizing:border-box;border:1px solid #898c95;border-bottom:none;background:linear-gradient(#f3f3f3 0%,#ebebeb 45%,#dddddd 50%,#d0d0d0 100%)"></div>
<div class="t" style="top:458.93px;font-size:13.2px;line-height:13.2px;color:#000;left:1418px;">Graphics Card</div>
<div style="left:1574px;top:455px;width:71.5px;height:21.5px;box-sizing:border-box;border:1px solid #898c95;border-bottom:none;background:linear-gradient(#f3f3f3 0%,#ebebeb 45%,#dddddd 50%,#d0d0d0 100%)"></div>
<div class="t" style="top:458.93px;font-size:13.2px;line-height:13.2px;color:#000;left:1578.3px;">Advanced</div>
<div style="left:1645.5px;top:455px;width:70.0px;height:21.5px;box-sizing:border-box;border:1px solid #898c95;border-bottom:none;background:linear-gradient(#f3f3f3 0%,#ebebeb 45%,#dddddd 50%,#d0d0d0 100%)"></div>
<div class="t" style="top:458.93px;font-size:13.2px;line-height:13.2px;color:#000;left:1652px;">Validation</div>
<div style="left:1508.5px;top:453.5px;width:65.5px;height:23.5px;box-sizing:border-box;border:1px solid #898c95;border-bottom:none;background:#fdfdfd"></div>
<div class="t" style="top:457.33px;font-size:13.2px;line-height:13.2px;color:#000;left:1516px;">Sensors</div>
<svg style="left:1818px;top:455px" width="18" height="12" viewBox="0 0 18 12"><path d="M1 3 H5 L6.5 1 H11.5 L13 3 H17 V11.5 H1Z" fill="#606060"/><circle cx="9" cy="7" r="3.2" fill="none" stroke="#c8c8c8" stroke-width="1.4"/></svg>
<svg style="left:1854.5px;top:454.5px" width="13.5" height="12.7" viewBox="0 0 17 16"><path d="M3.6 6.2 A5 5 0 0 1 12.6 4.6" fill="none" stroke="#111" stroke-width="2.2"/><path d="M13.4 9.8 A5 5 0 0 1 4.4 11.4" fill="none" stroke="#111" stroke-width="2.2"/><path d="M1.2 4.2 L6.2 5.2 L3 9Z" fill="#111"/><path d="M15.8 11.8 L10.8 10.8 L14 7Z" fill="#111"/></svg>
<div style="left:1889px;top:456px;width:13px;height:2px;background:#141414;border-radius:0.5px"></div>
<div style="left:1889px;top:460px;width:13px;height:2px;background:#141414;border-radius:0.5px"></div>
<div style="left:1889px;top:464px;width:13px;height:2px;background:#141414;border-radius:0.5px"></div>
<div style="left:1420px;top:488.3px;width:184px;height:24px;box-sizing:border-box;border-top:1px solid #a0a0a0;border-left:1px solid #a0a0a0;border-right:1px solid #fff;border-bottom:1px solid #fff;background:#f0f0f0"></div>
<div class="t" style="top:493.63px;font-size:13.2px;line-height:13.2px;color:#000;left:1424.4px;">GPU Clock</div>
<svg style="left:1585px;top:497.8px" width="11" height="6"><path d="M0 0 L11 0 L5.5 6Z" fill="#000"/></svg>
<div style="left:1611px;top:488.3px;width:87px;height:24px;box-sizing:border-box;border-top:1px solid #a0a0a0;border-left:1px solid #a0a0a0;border-right:1px solid #fff;border-bottom:1px solid #fff;background:#f0f0f0"></div>
<div class="t" style="top:493.63px;font-size:13.2px;line-height:13.2px;color:#000;right:236px;text-align:right;">925.0 MHz</div>
<div style="left:1705px;top:488.3px;width:199px;height:24px;box-sizing:border-box;border-top:1px solid #a0a0a0;border-left:1px solid #a0a0a0;border-right:1px solid #fff;border-bottom:1px solid #fff;background:#f0f0f0"></div>
<svg style="left:1706px;top:489.3px" width="198" height="23"><path d="M0 8.4 H198 V23 H0Z" fill="#ff0000"/><rect x="134" y="7.4" width="1" height="14.6" fill="#f4f4f4"/></svg>
<div style="left:1420px;top:522.1px;width:184px;height:24px;box-sizing:border-box;border-top:1px solid #a0a0a0;border-left:1px solid #a0a0a0;border-right:1px solid #fff;border-bottom:1px solid #fff;background:#f0f0f0"></div>
<div class="t" style="top:527.43px;font-size:13.2px;line-height:13.2px;color:#000;left:1424.4px;">Memory Clock</div>
<svg style="left:1585px;top:531.6px" width="11" height="6"><path d="M0 0 L11 0 L5.5 6Z" fill="#000"/></svg>
<div style="left:1611px;top:522.1px;width:87px;height:24px;box-sizing:border-box;border-top:1px solid #a0a0a0;border-left:1px solid #a0a0a0;border-right:1px solid #fff;border-bottom:1px solid #fff;background:#f0f0f0"></div>
<div class="t" style="top:527.43px;font-size:13.2px;line-height:13.2px;color:#000;right:236px;text-align:right;">1400.0 MHz</div>
<div style="left:1705px;top:522.1px;width:199px;height:24px;box-sizing:border-box;border-top:1px solid #a0a0a0;border-left:1px solid #a0a0a0;border-right:1px solid #fff;border-bottom:1px solid #fff;background:#f0f0f0"></div>
<svg style="left:1706px;top:523.1px" width="198" height="23"><path d="M0 9.3 H198 V23 H0Z" fill="#ff0000"/></svg>
<div style="left:1420px;top:555.9px;width:184px;height:24px;box-sizing:border-box;border-top:1px solid #a0a0a0;border-left:1px solid #a0a0a0;border-right:1px solid #fff;border-bottom:1px solid #fff;background:#f0f0f0"></div>
<div class="t" style="top:561.23px;font-size:13.2px;line-height:13.2px;color:#000;left:1424.4px;">GPU Temperature</div>
<svg style="left:1585px;top:565.4px" width="11" height="6"><path d="M0 0 L11 0 L5.5 6Z" fill="#000"/></svg>
<div style="left:1611px;top:555.9px;width:87px;height:24px;box-sizing:border-box;border-top:1px solid #a0a0a0;border-left:1px solid #a0a0a0;border-right:1px solid #fff;border-bottom:1px solid #fff;background:#f0f0f0"></div>
<div class="t" style="top:561.23px;font-size:13.2px;line-height:13.2px;color:#000;right:236px;text-align:right;">74.0 °C</div>
<div style="left:1705px;top:555.9px;width:199px;height:24px;box-sizing:border-box;border-top:1px solid #a0a0a0;border-left:1px solid #a0a0a0;border-right:1px solid #fff;border-bottom:1px solid #fff;background:#f0f0f0"></div>
<svg style="left:1706px;top:556.9px" width="198" height="23"><path d="M0 2.7 H198 V23 H0Z" fill="#ff0000"/></svg>
<div style="left:1420px;top:589.7px;width:184px;height:24px;box-sizing:border-box;border-top:1px solid #a0a0a0;border-left:1px solid #a0a0a0;border-right:1px solid #fff;border-bottom:1px solid #fff;background:#f0f0f0"></div>
<div class="t" style="top:595.03px;font-size:13.2px;line-height:13.2px;color:#000;left:1424.4px;">Fan Speed (%)</div>
<svg style="left:1585px;top:599.2px" width="11" height="6"><path d="M0 0 L11 0 L5.5 6Z" fill="#000"/></svg>
<div style="left:1611px;top:589.7px;width:87px;height:24px;box-sizing:border-box;border-top:1px solid #a0a0a0;border-left:1px solid #a0a0a0;border-right:1px solid #fff;border-bottom:1px solid #fff;background:#f0f0f0"></div>
<div class="t" style="top:595.03px;font-size:13.2px;line-height:13.2px;color:#000;right:236px;text-align:right;">55 %</div>
<div style="left:1705px;top:589.7px;width:199px;height:24px;box-sizing:border-box;border-top:1px solid #a0a0a0;border-left:1px solid #a0a0a0;border-right:1px solid #fff;border-bottom:1px solid #fff;background:#f0f0f0"></div>
<svg style="left:1706px;top:590.7px" width="198" height="23"><path d="M0 9.8 H198 V23 H0Z" fill="#ff0000"/></svg>
<div style="left:1420px;top:623.5px;width:184px;height:24px;box-sizing:border-box;border-top:1px solid #a0a0a0;border-left:1px solid #a0a0a0;border-right:1px solid #fff;border-bottom:1px solid #fff;background:#f0f0f0"></div>
<div class="t" style="top:628.83px;font-size:13.2px;line-height:13.2px;color:#000;left:1424.4px;">Fan Speed (RPM)</div>
<svg style="left:1585px;top:633.0px" width="11" height="6"><path d="M0 0 L11 0 L5.5 6Z" fill="#000"/></svg>
<div style="left:1611px;top:623.5px;width:87px;height:24px;box-sizing:border-box;border-top:1px solid #a0a0a0;border-left:1px solid #a0a0a0;border-right:1px solid #fff;border-bottom:1px solid #fff;background:#f0f0f0"></div>
<div class="t" style="top:628.83px;font-size:13.2px;line-height:13.2px;color:#000;right:236px;text-align:right;">2557 RPM</div>
<div style="left:1705px;top:623.5px;width:199px;height:24px;box-sizing:border-box;border-top:1px solid #a0a0a0;border-left:1px solid #a0a0a0;border-right:1px solid #fff;border-bottom:1px solid #fff;background:#f0f0f0"></div>
<svg style="left:1706px;top:624.5px" width="198" height="23"><path d="M0 4.0 H198 V23 H0Z" fill="#ff0000"/></svg>
<div style="left:1420px;top:657.3px;width:184px;height:24px;box-sizing:border-box;border-top:1px solid #a0a0a0;border-left:1px solid #a0a0a0;border-right:1px solid #fff;border-bottom:1px solid #fff;background:#f0f0f0"></div>
<div class="t" style="top:662.63px;font-size:13.2px;line-height:13.2px;color:#000;left:1424.4px;">GPU Load</div>
<svg style="left:1585px;top:666.8px" width="11" height="6"><path d="M0 0 L11 0 L5.5 6Z" fill="#000"/></svg>
<div style="left:1611px;top:657.3px;width:87px;height:24px;box-sizing:border-box;border-top:1px solid #a0a0a0;border-left:1px solid #a0a0a0;border-right:1px solid #fff;border-bottom:1px solid #fff;background:#f0f0f0"></div>
<div class="t" style="top:662.63px;font-size:13.2px;line-height:13.2px;color:#000;right:236px;text-align:right;">28 %</div>
<div style="left:1705px;top:657.3px;width:199px;height:24px;box-sizing:border-box;border-top:1px solid #a0a0a0;border-left:1px solid #a0a0a0;border-right:1px solid #fff;border-bottom:1px solid #fff;background:#f0f0f0"></div>
<svg style="left:1706px;top:658.3px" width="198" height="23"><path d="M0 17.3 3 16.8 6 16.8 9 17.3 12 17.8 15 16.8 18 18.3 21 15.8 24 16.8 27 17.3 30 16.8 33 17.3 36 14.3 39 18.3 42 17.8 45 16.8 48 17.3 51 17.3 54 15.8 57 18.3 60 16.8 63 18.8 66 16.8 69 18.3 72 18.3 75 15.8 78 18.8 81 17.3 84 17.3 87 15.8 90 17.3 93 18.8 96 16.8 99 18.3 102 15.8 105 17.3 108 15.8 111 18.8 114 17.3 117 17.3 120 18.8 123 16.8 126 17.3 129 17.8 132 18.8 135 17.3 138 18.8 141 18.8 144 17.8 147 18.3 150 16.8 153 15.8 156 18.3 159 15.8 162 18.8 165 18.3 168 18.3 171 15.8 174 18.8 177 16.8 180 18.3 183 14.3 186 17.8 189 17.3 192 17.3 195 17.3 198 18.3 V23 H0Z" fill="#ff0000"/></svg>
<div style="left:1420px;top:691.1px;width:184px;height:24px;box-sizing:border-box;border-top:1px solid #a0a0a0;border-left:1px solid #a0a0a0;border-right:1px solid #fff;border-bottom:1px solid #fff;background:#f0f0f0"></div>
<div class="t" style="top:696.43px;font-size:13.2px;line-height:13.2px;color:#000;left:1424.4px;">Memory Used (Dedicated)</div>
<svg style="left:1585px;top:700.6px" width="11" height="6"><path d="M0 0 L11 0 L5.5 6Z" fill="#000"/></svg>
<div style="left:1611px;top:691.1px;width:87px;height:24px;box-sizing:border-box;border-top:1px solid #a0a0a0;border-left:1px solid #a0a0a0;border-right:1px solid #fff;border-bottom:1px solid #fff;background:#f0f0f0"></div>
<div class="t" style="top:696.43px;font-size:13.2px;line-height:13.2px;color:#000;right:236px;text-align:right;">1443 MB</div>
<div style="left:1705px;top:691.1px;width:199px;height:24px;box-sizing:border-box;border-top:1px solid #a0a0a0;border-left:1px solid #a0a0a0;border-right:1px solid #fff;border-bottom:1px solid #fff;background:#f0f0f0"></div>
<svg style="left:1706px;top:692.1px" width="198" height="23"><path d="M0 9 35 9 36 7 110 7 112 8 125 7 130 6 135 7 170 7 171 8 198 8 V23 H0Z" fill="#ff0000"/></svg>
<div style="left:1420px;top:724.9px;width:184px;height:24px;box-sizing:border-box;border-top:1px solid #a0a0a0;border-left:1px solid #a0a0a0;border-right:1px solid #fff;border-bottom:1px solid #fff;background:#f0f0f0"></div>
<div class="t" style="top:730.23px;font-size:13.2px;line-height:13.2px;color:#000;left:1424.4px;">Memory Used (Dynamic)</div>
<svg style="left:1585px;top:734.4px" width="11" height="6"><path d="M0 0 L11 0 L5.5 6Z" fill="#000"/></svg>
<div style="left:1611px;top:724.9px;width:87px;height:24px;box-sizing:border-box;border-top:1px solid #a0a0a0;border-left:1px solid #a0a0a0;border-right:1px solid #fff;border-bottom:1px solid #fff;background:#f0f0f0"></div>
<div class="t" style="top:730.23px;font-size:13.2px;line-height:13.2px;color:#000;right:236px;text-align:right;">326 MB</div>
<div style="left:1705px;top:724.9px;width:199px;height:24px;box-sizing:border-box;border-top:1px solid #a0a0a0;border-left:1px solid #a0a0a0;border-right:1px solid #fff;border-bottom:1px solid #fff;background:#f0f0f0"></div>
<svg style="left:1706px;top:725.9px" width="198" height="23"><path d="M0 20.0 H198 V23.0 H0Z" fill="#ff0000"/></svg>
<div style="left:1420px;top:758.7px;width:184px;height:24px;box-sizing:border-box;border-top:1px solid #a0a0a0;border-left:1px solid #a0a0a0;border-right:1px solid #fff;border-bottom:1px solid #fff;background:#f0f0f0"></div>
<div class="t" style="top:764.03px;font-size:13.2px;line-height:13.2px;color:#000;left:1424.4px;">VDDC</div>
<svg style="left:1585px;top:768.2px" width="11" height="6"><path d="M0 0 L11 0 L5.5 6Z" fill="#000"/></svg>
<div style="left:1611px;top:758.7px;width:87px;height:24px;box-sizing:border-box;border-top:1px solid #a0a0a0;border-left:1px solid #a0a0a0;border-right:1px solid #fff;border-bottom:1px solid #fff;background:#f0f0f0"></div>
<div class="t" style="top:764.03px;font-size:13.2px;line-height:13.2px;color:#000;right:236px;text-align:right;">1.188 V</div>
<div style="left:1705px;top:758.7px;width:199px;height:24px;box-sizing:border-box;border-top:1px solid #a0a0a0;border-left:1px solid #a0a0a0;border-right:1px solid #fff;border-bottom:1px solid #fff;background:#f0f0f0"></div>
<svg style="left:1706px;top:759.7px" width="198" height="23"><path d="M0 2.8 H198 V23 H0Z" fill="#ff0000"/><rect x="134" y="1.7999999999999998" width="1" height="12" fill="#f4f4f4"/></svg>
<div style="left:1420px;top:792.5px;width:184px;height:24px;box-sizing:border-box;border-top:1px solid #a0a0a0;border-left:1px solid #a0a0a0;border-right:1px solid #fff;border-bottom:1px solid #fff;background:#f0f0f0"></div>
<div class="t" style="top:797.83px;font-size:13.2px;line-height:13.2px;color:#000;left:1424.4px;">CPU Temperature</div>
<svg style="left:1585px;top:802.0px" width="11" height="6"><path d="M0 0 L11 0 L5.5 6Z" fill="#000"/></svg>
<div style="left:1611px;top:792.5px;width:87px;height:24px;box-sizing:border-box;border-top:1px solid #a0a0a0;border-left:1px solid #a0a0a0;border-right:1px solid #fff;border-bottom:1px solid #fff;background:#f0f0f0"></div>
<div class="t" style="top:797.83px;font-size:13.2px;line-height:13.2px;color:#000;right:236px;text-align:right;">65.0 °C</div>
<div style="left:1705px;top:792.5px;width:199px;height:24px;box-sizing:border-box;border-top:1px solid #a0a0a0;border-left:1px solid #a0a0a0;border-right:1px solid #fff;border-bottom:1px solid #fff;background:#f0f0f0"></div>
<svg style="left:1706px;top:793.5px" width="198" height="23"><path d="M0 10.3 2 10.9 4 9.5 6 10.9 8 9.5 10 10.600000000000001 12 9.5 14 10.600000000000001 16 10.9 18 10.600000000000001 20 10.600000000000001 22 9.5 24 10.600000000000001 26 10.3 28 10.9 30 10.3 32 10.9 34 10.600000000000001 36 10.3 38 10.9 40 10.600000000000001 42 10.600000000000001 44 10.600000000000001 46 10.3 48 10.3 50 10.600000000000001 52 10.9 54 10.9 56 10.3 58 10.3 60 9.5 62 9.5 64 10.3 66 10.9 68 10.3 70 9.5 72 10.3 74 10.3 76 10.9 78 9.5 80 9.5 82 10.3 84 10.3 86 10.600000000000001 88 10.600000000000001 90 10.3 92 9.5 94 10.600000000000001 96 10.9 98 10.600000000000001 100 10.9 102 10.600000000000001 104 10.3 106 10.3 108 10.9 110 10.3 112 10.3 114 10.3 116 10.600000000000001 118 10.600000000000001 120 10.3 122 10.3 124 9.5 126 10.9 128 10.600000000000001 130 10.9 132 10.3 134 10.3 136 10.9 138 10.9 140 10.9 142 10.3 144 9.5 146 9.5 148 9.5 150 10.600000000000001 152 9.5 154 10.600000000000001 156 10.600000000000001 158 10.3 160 10.600000000000001 162 10.600000000000001 164 10.9 166 9.5 168 10.3 170 10.9 172 9.5 174 10.9 176 10.600000000000001 178 10.9 180 10.600000000000001 182 10.9 184 10.3 186 9.5 188 10.600000000000001 190 10.9 192 10.3 194 9.5 196 10.600000000000001 198 10.600000000000001 V23 H0Z" fill="#ff0000"/></svg>
<div style="left:1420px;top:826.3px;width:184px;height:24px;box-sizing:border-box;border-top:1px solid #a0a0a0;border-left:1px solid #a0a0a0;border-right:1px solid #fff;border-bottom:1px solid #fff;background:#f0f0f0"></div>
<div class="t" style="top:831.63px;font-size:13.2px;line-height:13.2px;color:#000;left:1424.4px;">System Memory Used</div>
<svg style="left:1585px;top:835.8px" width="11" height="6"><path d="M0 0 L11 0 L5.5 6Z" fill="#000"/></svg>
<div style="left:1611px;top:826.3px;width:87px;height:24px;box-sizing:border-box;border-top:1px solid #a0a0a0;border-left:1px solid #a0a0a0;border-right:1px solid #fff;border-bottom:1px solid #fff;background:#f0f0f0"></div>
<div class="t" style="top:831.63px;font-size:13.2px;line-height:13.2px;color:#000;right:236px;text-align:right;">17161 MB</div>
<div style="left:1705px;top:826.3px;width:199px;height:24px;box-sizing:border-box;border-top:1px solid #a0a0a0;border-left:1px solid #a0a0a0;border-right:1px solid #fff;border-bottom:1px solid #fff;background:#f0f0f0"></div>
<svg style="left:1706px;top:827.3px" width="198" height="23"><path d="M0 11.4 H198 V23 H0Z" fill="#ff0000"/></svg>
<div style="left:1421px;top:1005px;width:16px;height:16px;box-sizing:border-box;border:1px solid #8e8f8f;background:#fff"><div style="left:1px;top:1px;width:12px;height:12px;background:linear-gradient(135deg,#c9ced6 0%,#e4e6ea 45%,#f6f6f6 100%)"></div></div>
<div class="t" style="top:1006.73px;font-size:13.2px;line-height:13.2px;color:#000;left:1440.4px;">Log to file</div>
<div style="left:1841.7px;top:1000.5px;width:62.5px;height:23.200000000000045px;box-sizing:border-box;border:1px solid #707070;border-radius:3px;background:linear-gradient(#f2f2f2 0%,#ebebeb 48%,#dddddd 52%,#cfcfcf 100%);box-shadow:inset 0 0 0 1px #fcfcfc"></div>
<div class="t" style="top:1005.49px;font-size:13.6px;line-height:13.6px;color:#000;left:1841.7px;width:62.5px;text-align:center;">Reset</div>
<div style="left:1814.5px;top:1039.7px;width:97.20000000000005px;height:24.700000000000045px;box-sizing:border-box;border:1px solid #707070;border-radius:3px;background:linear-gradient(#f2f2f2 0%,#ebebeb 48%,#dddddd 52%,#cfcfcf 100%);box-shadow:inset 0 0 0 1px #fcfcfc"></div>
<div class="t" style="top:1045.49px;font-size:13.6px;line-height:13.6px;color:#000;left:1814.5px;width:97.20000000000005px;text-align:center;">Close</div>
<div style="left:1410px;top:1040px;width:288px;height:23px;box-sizing:border-box;border:1px solid #707070;border-radius:3px;background:linear-gradient(#f2f2f2 0%,#ebebeb 48%,#dddddd 52%,#cfcfcf 100%)"></div>
<div class="t" style="top:1044.83px;font-size:13.2px;line-height:13.2px;color:#000;left:1414.7px;">AMD Radeon (TM) R9 200 Series</div>
<svg style="left:1681px;top:1049px" width="11" height="6"><path d="M0 0 L11 0 L5.5 6Z" fill="#000"/></svg></body></html>
